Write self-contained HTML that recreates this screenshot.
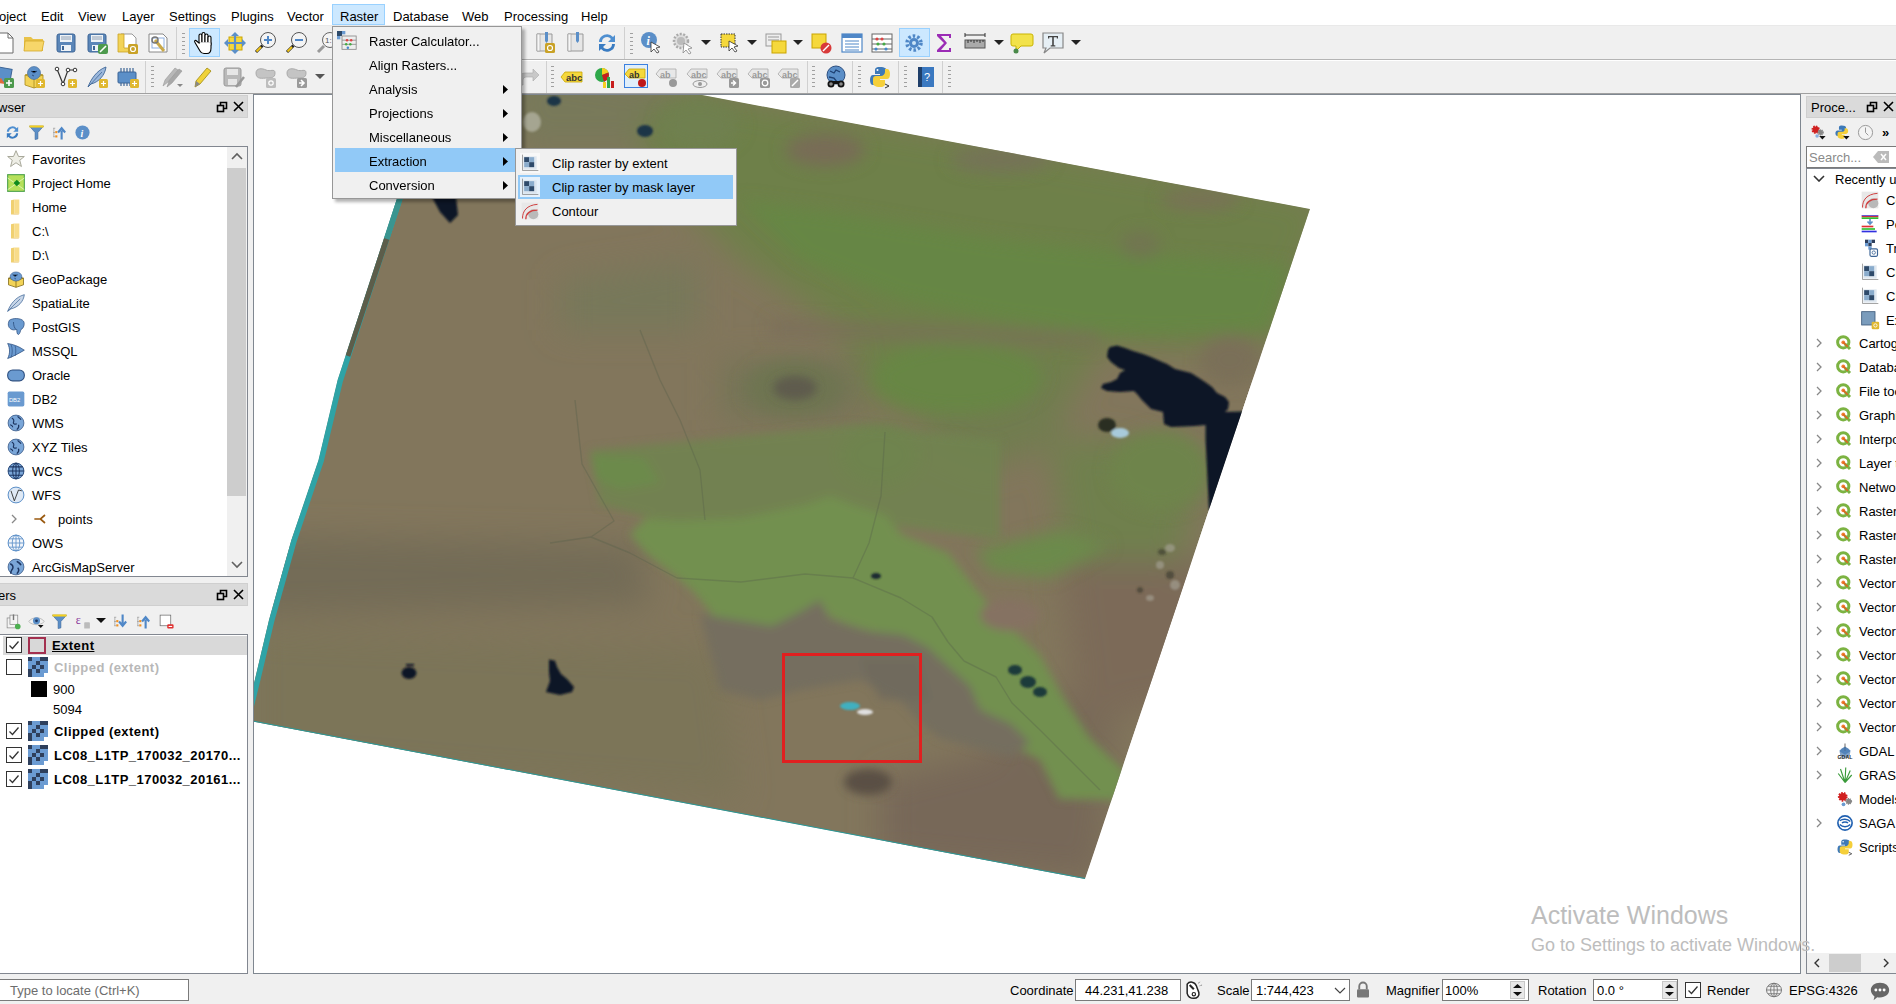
<!DOCTYPE html>
<html><head><meta charset="utf-8">
<style>
*{margin:0;padding:0;box-sizing:border-box}
html,body{width:1896px;height:1004px;overflow:hidden;background:#f0f0f0;font-family:"Liberation Sans",sans-serif;font-size:13px;color:#000}
.a{position:absolute}
.t{position:absolute;white-space:nowrap;line-height:14px}
.b{font-weight:bold}
.dtitle{position:absolute;background:#dadada;border:1px solid #cfcfcf}
.tree{position:absolute;background:#fff;border:1px solid #828790}
.menu{position:absolute;background:#f0f0f0;border:1px solid #979797}
.cb{position:absolute;width:16px;height:16px;border:1px solid #333;background:#fff}
</style></head><body>

<div class="a" style="left:0;top:0;width:1896px;height:26px;background:#fff"></div>
<div class="a" style="left:332px;top:4px;width:53px;height:21px;background:#cce8ff;border:1px solid #99d1ff"></div>
<span class="t" style="left:-1px;top:10px;">oject</span>
<span class="t" style="left:41px;top:10px;">Edit</span>
<span class="t" style="left:78px;top:10px;">View</span>
<span class="t" style="left:122px;top:10px;">Layer</span>
<span class="t" style="left:169px;top:10px;">Settings</span>
<span class="t" style="left:231px;top:10px;">Plugins</span>
<span class="t" style="left:287px;top:10px;">Vector</span>
<span class="t" style="left:340px;top:10px;">Raster</span>
<span class="t" style="left:393px;top:10px;">Database</span>
<span class="t" style="left:462px;top:10px;">Web</span>
<span class="t" style="left:504px;top:10px;">Processing</span>
<span class="t" style="left:581px;top:10px;">Help</span>
<div class="a" style="left:0;top:25px;width:1896px;height:35px;background:#f0f0f0;border-top:1px solid #e9e9e9;border-bottom:1px solid #b4b4b4"></div>
<div class="a" style="left:0;top:60px;width:1896px;height:34px;background:#f0f0f0;border-top:1px solid #ffffff;border-bottom:1px solid #a0a0a0"></div>
<div class="a" style="left:176px;top:27px;width:1px;height:32px;background:#d0d0d0"></div>
<div class="a" style="left:182px;top:32px;width:3px;height:24px;background:repeating-linear-gradient(#f0f0f0 0 1px,#a0a0a0 1px 2px,#f0f0f0 2px 4px)"></div>
<div class="a" style="left:624px;top:27px;width:1px;height:32px;background:#d0d0d0"></div>
<div class="a" style="left:630px;top:32px;width:3px;height:24px;background:repeating-linear-gradient(#f0f0f0 0 1px,#a0a0a0 1px 2px,#f0f0f0 2px 4px)"></div>
<div class="a" style="left:189px;top:28px;width:31px;height:29px;background:#cce8ff;border:1px solid #99d1ff"></div>
<div class="a" style="left:899px;top:28px;width:31px;height:29px;background:#cce8ff;border:1px solid #99d1ff"></div>
<svg class="a" style="left:-7.0px;top:31.0px" width="24" height="24" viewBox="0 0 24 24"><path d="M4 2h11l5 5v15H4z" fill="#fff" stroke="#6b6b6b"/><path d="M15 2v5h5" fill="none" stroke="#6b6b6b"/></svg>
<svg class="a" style="left:22.0px;top:31.0px" width="24" height="24" viewBox="0 0 24 24"><path d="M2 6h7l2 2h10v12H2z" fill="#e8c24a"/><path d="M3 10h19l-2 10H2z" fill="#f7d66a" stroke="#d4a928" stroke-width=".8"/></svg>
<svg class="a" style="left:54.0px;top:31.0px" width="24" height="24" viewBox="0 0 24 24"><rect x="3" y="3" width="18" height="18" rx="2" fill="#5b86b8" stroke="#3d6596"/><rect x="6" y="4" width="12" height="7" fill="#eef2f6"/><path d="M7 6h10M7 8h10" stroke="#7a8ea6" stroke-width=".8"/><rect x="7" y="14" width="10" height="6" fill="#eef2f6"/><rect x="8" y="15" width="2" height="4" fill="#3d6596"/></svg>
<svg class="a" style="left:85.0px;top:31.0px" width="24" height="24" viewBox="0 0 24 24"><rect x="3" y="3" width="18" height="18" rx="2" fill="#5b86b8" stroke="#3d6596"/><rect x="6" y="4" width="12" height="7" fill="#eef2f6"/><path d="M7 6h10M7 8h10" stroke="#7a8ea6" stroke-width=".8"/><rect x="7" y="14" width="10" height="6" fill="#eef2f6"/><rect x="8" y="15" width="2" height="4" fill="#3d6596"/><rect x="13" y="13" width="10" height="10" rx="2" fill="#4d9a4d"/><path d="M15 21l6-6" stroke="#fff" stroke-width="1.6"/></svg>
<svg class="a" style="left:115.0px;top:31.0px" width="24" height="24" viewBox="0 0 24 24"><path d="M6 3h11l4 4v13H6z" fill="#fff" stroke="#999"/><path d="M3 3h6v14h10v4H3z" fill="#f2d357" stroke="#c9a227" stroke-width=".8"/><rect x="13" y="13" width="10" height="10" rx="1.5" fill="#c9a227"/><circle cx="18" cy="18" r="2.5" fill="none" stroke="#fff" stroke-width="1.2"/></svg>
<svg class="a" style="left:146.0px;top:31.0px" width="24" height="24" viewBox="0 0 24 24"><path d="M3 3h14l4 4v14H3z" fill="#fff" stroke="#888"/><rect x="6" y="7" width="12" height="10" fill="none" stroke="#8fb0e0"/><path d="M9 9l9 11" stroke="#c9a94a" stroke-width="3"/><circle cx="9" cy="9" r="3" fill="none" stroke="#777" stroke-width="1.5"/></svg>
<svg class="a" style="left:192.0px;top:31.0px" width="24" height="24" viewBox="0 0 24 24"><g fill="#fff" stroke="#000" stroke-width="1.1"><rect x="7" y="3" width="3" height="11" rx="1.5"/><rect x="10" y="1.5" width="3" height="12" rx="1.5"/><rect x="13" y="3" width="3" height="11" rx="1.5"/><rect x="16" y="5" width="3" height="10" rx="1.5"/><path d="M7 12 L4 9.5 C3 9 2 10 3 11.5 L8 20 C9 22 10 22.5 12 22.5 H15 C17.5 22.5 19 20 19 17 V12 Z"/></g><path d="M8 12.5h10.5" stroke="#fff" stroke-width="2.5"/></svg>
<svg class="a" style="left:223.0px;top:31.0px" width="24" height="24" viewBox="0 0 24 24"><rect x="6" y="6" width="13" height="13" fill="#f5d83c" stroke="#c9a400"/><path d="M12 1l4 4h-8zM12 23l4-4h-8zM1 12l4-4v8zM23 12l-4-4v8z" fill="#5b8fc8"/><path d="M12 4v16M4 12h16" stroke="#5b8fc8" stroke-width="2.2"/></svg>
<svg class="a" style="left:254.0px;top:31.0px" width="24" height="24" viewBox="0 0 24 24"><circle cx="14" cy="9" r="7.5" fill="#f4f4f4" stroke="#555" stroke-width="1"/><path d="M10 9h8M14 5v8" stroke="#4f87c7" stroke-width="2"/><path d="M8.5 14.5L2 21" stroke="#222" stroke-width="3"/><path d="M7 16L2.5 20.5" stroke="#f0c419" stroke-width="2"/></svg>
<svg class="a" style="left:285.0px;top:31.0px" width="24" height="24" viewBox="0 0 24 24"><circle cx="14" cy="9" r="7.5" fill="#f4f4f4" stroke="#555" stroke-width="1"/><path d="M10 9h8" stroke="#4f87c7" stroke-width="2"/><path d="M8.5 14.5L2 21" stroke="#222" stroke-width="3"/><path d="M7 16L2.5 20.5" stroke="#f0c419" stroke-width="2"/></svg>
<svg class="a" style="left:316.0px;top:31.0px" width="24" height="24" viewBox="0 0 24 24"><circle cx="14" cy="9" r="7.5" fill="#f4f4f4" stroke="#666" stroke-width="1"/><text x="9" y="12" font-size="8" font-family="Liberation Sans" fill="#555">1:</text><path d="M8 15L2 21" stroke="#999" stroke-width="3"/></svg>
<svg class="a" style="left:533.0px;top:31.0px" width="24" height="24" viewBox="0 0 24 24"><path d="M4 3h15v17H4z" fill="#e6e6e6" stroke="#999"/><rect x="4" y="3" width="3" height="17" fill="#f6f6f6" stroke="#999" stroke-width=".6"/><path d="M12 1h3v9l-1.5 2-1.5-2z" fill="#5b8fc8"/><rect x="12" y="12" width="10" height="10" rx="1.5" fill="#c9a227"/><circle cx="17" cy="17" r="2.5" fill="none" stroke="#fff" stroke-width="1.2"/></svg>
<svg class="a" style="left:564.0px;top:31.0px" width="24" height="24" viewBox="0 0 24 24"><path d="M4 3h15v17H4z" fill="#e6e6e6" stroke="#999"/><rect x="4" y="3" width="3" height="17" fill="#f6f6f6" stroke="#999" stroke-width=".6"/><path d="M12 1h3v9l-1.5 2-1.5-2z" fill="#5b8fc8"/></svg>
<svg class="a" style="left:595.0px;top:31.0px" width="24" height="24" viewBox="0 0 24 24"><path d="M4 11a8 8 0 0 1 14-5l2-2v7h-7l3-3a5 5 0 0 0-9 3z" fill="#4f8fd0"/><path d="M20 13a8 8 0 0 1-14 5l-2 2v-7h7l-3 3a5 5 0 0 0 9-3z" fill="#3a7cc2"/></svg>
<svg class="a" style="left:639.0px;top:31.0px" width="24" height="24" viewBox="0 0 24 24"><circle cx="10" cy="9" r="8" fill="#5b8fc8"/><text x="7.5" y="14" font-size="12" font-style="italic" font-weight="bold" font-family="Liberation Serif" fill="#fff">i</text><path d="M12 11l9 5-4 1 3 4-2 1-3-4-3 3z" fill="#fff" stroke="#333" stroke-width=".8"/></svg>
<svg class="a" style="left:671.0px;top:31.0px" width="24" height="24" viewBox="0 0 24 24"><circle cx="10" cy="10" r="7" fill="#ddd" stroke="#aaa" stroke-width="2.5" stroke-dasharray="2 1.5"/><circle cx="10" cy="10" r="4" fill="#bbb"/><path d="M13 12l8 5-4 1 3 4-2 1-3-4-3 3z" fill="#fff" stroke="#888" stroke-width=".8"/></svg>
<svg class="a" style="left:718.0px;top:31.0px" width="24" height="24" viewBox="0 0 24 24"><rect x="3" y="3" width="14" height="13" fill="#f5d83c" stroke="#333" stroke-dasharray="1.5 1"/><path d="M11 10l9 5-4 1 3 4-2 1-3-4-3 3z" fill="#fff" stroke="#333" stroke-width=".8"/></svg>
<svg class="a" style="left:764.0px;top:31.0px" width="24" height="24" viewBox="0 0 24 24"><rect x="2" y="3" width="15" height="12" fill="#eee" stroke="#999"/><path d="M4 6h11M4 9h11" stroke="#999"/><rect x="8" y="10" width="14" height="12" fill="#f5d83c" stroke="#c9a400"/></svg>
<svg class="a" style="left:809.0px;top:31.0px" width="24" height="24" viewBox="0 0 24 24"><rect x="3" y="3" width="14" height="14" fill="#f5d83c" stroke="#c9a400"/><circle cx="17" cy="17" r="5.5" fill="#d83a3a"/><path d="M14 20l6-6" stroke="#fff" stroke-width="1.5"/></svg>
<svg class="a" style="left:840.0px;top:31.0px" width="24" height="24" viewBox="0 0 24 24"><rect x="2" y="3" width="20" height="18" fill="#fff" stroke="#4f87c7" stroke-width="1.2"/><rect x="2" y="3" width="20" height="4" fill="#4f87c7"/><path d="M5 10h14M5 13h14M5 16h14M5 19h14" stroke="#4f87c7"/></svg>
<svg class="a" style="left:870.0px;top:31.0px" width="24" height="24" viewBox="0 0 24 24"><rect x="2" y="3" width="20" height="18" fill="#fff" stroke="#666"/><path d="M2 8h20M2 13h20M2 18h20" stroke="#666"/><circle cx="7" cy="8" r="1.6" fill="#d44"/><circle cx="12" cy="8" r="1.6" fill="#d44"/><circle cx="8" cy="13" r="1.6" fill="#4a4"/><circle cx="14" cy="13" r="1.6" fill="#4a4"/><circle cx="6" cy="18" r="1.6" fill="#48c"/><circle cx="16" cy="18" r="1.6" fill="#48c"/></svg>
<svg class="a" style="left:902.0px;top:31.0px" width="24" height="24" viewBox="0 0 24 24"><circle cx="12" cy="12" r="7" fill="none" stroke="#4f87c7" stroke-width="3.5" stroke-dasharray="2.5 2"/><circle cx="12" cy="12" r="5" fill="#4f87c7"/><circle cx="12" cy="12" r="2" fill="#cce4f7"/></svg>
<svg class="a" style="left:932.0px;top:31.0px" width="24" height="24" viewBox="0 0 24 24"><path d="M5 3h14v4h-2V5H9l6 7-6 7h8v-2h2v4H5v-2l7-7-7-7z" fill="#9b2bb5"/></svg>
<svg class="a" style="left:963.0px;top:31.0px" width="24" height="24" viewBox="0 0 24 24"><rect x="2" y="9" width="20" height="8" fill="#aaa" stroke="#555"/><path d="M5 9v3M8 9v2M11 9v3M14 9v2M17 9v3M20 9v2" stroke="#333"/><path d="M2 4h20M2 2v4M22 2v4" stroke="#333"/></svg>
<svg class="a" style="left:1010.0px;top:31.0px" width="24" height="24" viewBox="0 0 24 24"><path d="M3 3h18a2 2 0 0 1 2 2v8a2 2 0 0 1-2 2H11l-5 5v-5H3a2 2 0 0 1-2-2V5a2 2 0 0 1 2-2z" fill="#f2e24a" stroke="#c9b400"/><circle cx="6" cy="20" r="2.5" fill="#4a8a4a"/></svg>
<svg class="a" style="left:1041.0px;top:31.0px" width="24" height="24" viewBox="0 0 24 24"><path d="M2 2h20v15H9l-6 5 2-5H2z" fill="#e6eff5" stroke="#888" stroke-width="1.2"/><path d="M7 5h10v2.5h-1.2V6.3h-3v8h1.5v1.2H9.7v-1.2h1.5v-8h-3v1.2H7z" fill="#444"/></svg>
<svg class="a" style="left:701px;top:40px" width="10" height="6" viewBox="0 0 10 6"><path d="M0 0h10L5 5z" fill="#222"/></svg>
<svg class="a" style="left:747px;top:40px" width="10" height="6" viewBox="0 0 10 6"><path d="M0 0h10L5 5z" fill="#222"/></svg>
<svg class="a" style="left:793px;top:40px" width="10" height="6" viewBox="0 0 10 6"><path d="M0 0h10L5 5z" fill="#222"/></svg>
<svg class="a" style="left:994px;top:40px" width="10" height="6" viewBox="0 0 10 6"><path d="M0 0h10L5 5z" fill="#222"/></svg>
<svg class="a" style="left:1071px;top:40px" width="10" height="6" viewBox="0 0 10 6"><path d="M0 0h10L5 5z" fill="#222"/></svg>
<div class="a" style="left:145px;top:61px;width:1px;height:32px;background:#d0d0d0"></div>
<div class="a" style="left:151px;top:65px;width:3px;height:24px;background:repeating-linear-gradient(#f0f0f0 0 1px,#a0a0a0 1px 2px,#f0f0f0 2px 4px)"></div>
<div class="a" style="left:546px;top:61px;width:1px;height:32px;background:#d0d0d0"></div>
<div class="a" style="left:551px;top:65px;width:3px;height:24px;background:repeating-linear-gradient(#f0f0f0 0 1px,#a0a0a0 1px 2px,#f0f0f0 2px 4px)"></div>
<div class="a" style="left:807px;top:61px;width:1px;height:32px;background:#d0d0d0"></div>
<div class="a" style="left:812px;top:65px;width:3px;height:24px;background:repeating-linear-gradient(#f0f0f0 0 1px,#a0a0a0 1px 2px,#f0f0f0 2px 4px)"></div>
<div class="a" style="left:852px;top:61px;width:1px;height:32px;background:#d0d0d0"></div>
<div class="a" style="left:858px;top:65px;width:3px;height:24px;background:repeating-linear-gradient(#f0f0f0 0 1px,#a0a0a0 1px 2px,#f0f0f0 2px 4px)"></div>
<div class="a" style="left:898px;top:61px;width:1px;height:32px;background:#d0d0d0"></div>
<div class="a" style="left:904px;top:65px;width:3px;height:24px;background:repeating-linear-gradient(#f0f0f0 0 1px,#a0a0a0 1px 2px,#f0f0f0 2px 4px)"></div>
<div class="a" style="left:942px;top:61px;width:1px;height:32px;background:#d0d0d0"></div>
<div class="a" style="left:948px;top:65px;width:3px;height:24px;background:repeating-linear-gradient(#f0f0f0 0 1px,#a0a0a0 1px 2px,#f0f0f0 2px 4px)"></div>
<div class="a" style="left:624px;top:64px;width:24px;height:24px;background:#e0eefa;border:1px solid #3a80e0"></div>
<svg class="a" style="left:-7.0px;top:65.0px" width="24" height="24" viewBox="0 0 24 24"><rect x="4" y="3" width="14" height="14" fill="#5b8fc8" stroke="#3d6596" transform="rotate(10 11 10)"/><path d="M0 17l8-4 4 6z" fill="#e06a3a"/><rect x="11" y="13" width="10" height="10" rx="1.5" fill="#4d9a4d"/><path d="M16 15v6M13 18h6" stroke="#fff" stroke-width="1.6"/></svg>
<svg class="a" style="left:22.0px;top:65.0px" width="24" height="24" viewBox="0 0 24 24"><path d="M3 10l9-3 9 3v10l-9 3-9-3z" fill="#f2d357" stroke="#a88a1a" stroke-width=".8"/><path d="M3 10l9 3 9-3M12 13v10" stroke="#a88a1a" stroke-width=".8" fill="none"/><circle cx="12" cy="8" r="6.5" fill="#5b8fc8" stroke="#3d6596" stroke-width=".6"/><path d="M9 6l3 2 3-2M10 10l2 1" stroke="#2d4f80"/><rect x="14" y="14" width="9" height="9" rx="1.5" fill="#e0b830"/><path d="M18.5 16v5M16 18.5h5" stroke="#fff" stroke-width="1.2"/></svg>
<svg class="a" style="left:54.0px;top:65.0px" width="24" height="24" viewBox="0 0 24 24"><path d="M3 4l6 15 5-14 7 0" fill="none" stroke="#333" stroke-width="1.2"/><circle cx="3" cy="4" r="1.8" fill="#fff" stroke="#333"/><circle cx="9" cy="19" r="1.8" fill="#fff" stroke="#333"/><circle cx="14" cy="5" r="1.8" fill="#fff" stroke="#333"/><circle cx="21" cy="5" r="1.8" fill="#fff" stroke="#333"/><rect x="14" y="14" width="9" height="9" rx="1.5" fill="#e0b830"/><path d="M18.5 16v5M16 18.5h5" stroke="#fff" stroke-width="1.2"/></svg>
<svg class="a" style="left:85.0px;top:65.0px" width="24" height="24" viewBox="0 0 24 24"><path d="M3 22C6 14 12 5 21 2c-1 8-7 15-15 17z" fill="#9cb8dc" stroke="#3d6596" stroke-width=".9"/><path d="M3 22L17 7" stroke="#3d6596" stroke-width=".8"/><rect x="14" y="14" width="9" height="9" rx="1.5" fill="#e0b830"/><path d="M18.5 16v5M16 18.5h5" stroke="#fff" stroke-width="1.2"/></svg>
<svg class="a" style="left:116.0px;top:65.0px" width="24" height="24" viewBox="0 0 24 24"><rect x="2" y="7" width="18" height="11" rx="1" fill="#5b8fc8" stroke="#3d6596"/><path d="M5 3v4M8 3v4M11 3v4M14 3v4M17 3v4M5 18v3M8 18v3M11 18v3M14 18v3" stroke="#3d6596" stroke-width="1.2"/><rect x="14" y="14" width="9" height="9" rx="1.5" fill="#e0b830"/><path d="M18.5 16v5M16 18.5h5" stroke="#fff" stroke-width="1.2"/></svg>
<svg class="a" style="left:161.0px;top:65.0px" width="24" height="24" viewBox="0 0 24 24"><path d="M2 21l2-6 10-12 3 2-10 12z" fill="#b8b8b8" stroke="#999" stroke-width=".6"/><path d="M6 22l2-6 10-12 3 2-10 12z" fill="#a8a8a8" stroke="#999" stroke-width=".6"/><path d="M16 19h6l-3 3z" fill="#888"/></svg>
<svg class="a" style="left:191.0px;top:65.0px" width="24" height="24" viewBox="0 0 24 24"><path d="M4 22l1-6 11-13 4 3-11 13z" fill="#f0d23a" stroke="#a08a10" stroke-width=".8"/><path d="M4 22l1-6 4 3z" fill="#888"/></svg>
<svg class="a" style="left:222.0px;top:65.0px" width="24" height="24" viewBox="0 0 24 24"><rect x="2" y="3" width="17" height="18" rx="2" fill="#b9b9b9" stroke="#999"/><rect x="5" y="4" width="11" height="6" fill="#e6e6e6"/><rect x="6" y="14" width="9" height="6" fill="#e6e6e6"/><path d="M14 22l8-10" stroke="#999" stroke-width="2.5"/></svg>
<svg class="a" style="left:254.0px;top:65.0px" width="24" height="24" viewBox="0 0 24 24"><path d="M2 8c0-5 6-5 10-3s9-2 9 3-4 5-8 5-11 2-11-5z" fill="#c4c4c4" stroke="#aaa"/><rect x="12" y="13" width="10" height="10" rx="1.5" fill="#bdbdbd"/><circle cx="17" cy="18" r="2.2" fill="none" stroke="#fff" stroke-width="1.2"/></svg>
<svg class="a" style="left:285.0px;top:65.0px" width="24" height="24" viewBox="0 0 24 24"><path d="M2 8c0-5 6-5 10-3s9-2 9 3-4 5-8 5-11 2-11-5z" fill="#c4c4c4" stroke="#aaa"/><rect x="12" y="13" width="10" height="10" rx="1.5" fill="#9a9a9a"/><path d="M14 18h4M16 15l3 3-3 3" stroke="#fff" stroke-width="1.6" fill="none"/></svg>
<svg class="a" style="left:517.0px;top:65.0px" width="24" height="24" viewBox="0 0 24 24"><path d="M2 20v-6a6 6 0 0 1 6-6h8V4l6 6-6 6v-4H9a3 3 0 0 0-3 3v5z" fill="#c8c8c8" stroke="#aaa" stroke-width=".6"/></svg>
<svg class="a" style="left:560.0px;top:65.0px" width="24" height="24" viewBox="0 0 24 24"><path d="M1 12l4-5h17v10H5z" fill="#f5d83c" stroke="#c9a400" stroke-width=".8"/><text x="6" y="16" font-size="9.5" font-weight="bold" font-family="Liberation Sans" fill="#333">abc</text></svg>
<svg class="a" style="left:593.0px;top:65.0px" width="24" height="24" viewBox="0 0 24 24"><circle cx="9" cy="10" r="7" fill="#2ea84a"/><path d="M9 10V3a7 7 0 0 1 6.5 4.5z" fill="#f5d020"/><path d="M9 10l6.5-2.5A7 7 0 0 1 11 16.7z" fill="#c81e1e"/><rect x="10" y="17" width="3" height="6" fill="#f5d020"/><rect x="14" y="12" width="3" height="11" fill="#2ea84a"/><rect x="18" y="16" width="3" height="7" fill="#c81e1e"/></svg>
<svg class="a" style="left:624.0px;top:65.0px" width="24" height="24" viewBox="0 0 24 24"><path d="M1 9l4-5h16v9H5z" fill="#f5d83c" stroke="#c9a400" stroke-width=".8"/><text x="5" y="12.5" font-size="9" font-weight="bold" font-family="Liberation Sans" fill="#333">ab</text><circle cx="18" cy="18" r="4" fill="#c01818"/></svg>
<svg class="a" style="left:655.0px;top:65.0px" width="24" height="24" viewBox="0 0 24 24"><path d="M1 9l4-5h16v9H5z" fill="#e8e8e8" stroke="#aaa" stroke-width=".8"/><text x="5" y="12.5" font-size="9" font-weight="bold" font-family="Liberation Sans" fill="#999">ab</text><circle cx="18" cy="18" r="4" fill="#999"/></svg>
<svg class="a" style="left:686.0px;top:65.0px" width="24" height="24" viewBox="0 0 24 24"><path d="M1 9l4-5h16v9H5z" fill="#e8e8e8" stroke="#aaa" stroke-width=".8"/><text x="5" y="12.5" font-size="9" font-weight="bold" font-family="Liberation Sans" fill="#999">abc</text><ellipse cx="14" cy="19" rx="7" ry="3.5" fill="#eee" stroke="#999"/><circle cx="14" cy="19" r="2" fill="#999"/></svg>
<svg class="a" style="left:716.0px;top:65.0px" width="24" height="24" viewBox="0 0 24 24"><path d="M1 9l4-5h16v9H5z" fill="#e8e8e8" stroke="#aaa" stroke-width=".8"/><text x="5" y="12.5" font-size="9" font-weight="bold" font-family="Liberation Sans" fill="#999">abc</text><rect x="13" y="13" width="10" height="10" rx="1.5" fill="#999"/><path d="M15 18h4M17 15.5l2.5 2.5-2.5 2.5" stroke="#fff" stroke-width="1.5" fill="none"/></svg>
<svg class="a" style="left:747.0px;top:65.0px" width="24" height="24" viewBox="0 0 24 24"><path d="M1 9l4-5h16v9H5z" fill="#e8e8e8" stroke="#aaa" stroke-width=".8"/><text x="5" y="12.5" font-size="9" font-weight="bold" font-family="Liberation Sans" fill="#999">abc</text><rect x="13" y="13" width="10" height="10" rx="1.5" fill="#999"/><circle cx="18" cy="18" r="2.8" fill="none" stroke="#fff" stroke-width="1.3"/></svg>
<svg class="a" style="left:777.0px;top:65.0px" width="24" height="24" viewBox="0 0 24 24"><path d="M1 9l4-5h16v9H5z" fill="#e8e8e8" stroke="#aaa" stroke-width=".8"/><text x="5" y="12.5" font-size="9" font-weight="bold" font-family="Liberation Sans" fill="#999">abc</text><rect x="13" y="13" width="10" height="10" rx="1.5" fill="#aaa"/><path d="M15 21l6-6" stroke="#fff" stroke-width="1.5"/></svg>
<svg class="a" style="left:824.0px;top:65.0px" width="24" height="24" viewBox="0 0 24 24"><circle cx="12" cy="10" r="9" fill="#5b8fc8" stroke="#2d4f80"/><path d="M6 6l4 2 2-3 4 2M5 12l5 1 3 4" stroke="#1d3f70" stroke-width="1.3" fill="none"/><circle cx="7" cy="19" r="3.5" fill="#111"/><circle cx="17" cy="19" r="3.5" fill="#111"/><rect x="9" y="16" width="6" height="3" fill="#111"/><circle cx="7" cy="19" r="1.8" fill="#888"/><circle cx="17" cy="19" r="1.8" fill="#888"/></svg>
<svg class="a" style="left:868.0px;top:65.0px" width="24" height="24" viewBox="0 0 24 24"><path d="M12 2c-5 0-5 2-5 4v3h5v1H5c-2 0-3 2-3 5s1 5 3 5h2v-3c0-2 2-4 4-4h5c2 0 3-1 3-3V6c0-2-2-4-7-4z" fill="#3d79b8"/><circle cx="9.5" cy="5" r="1" fill="#fff"/><path d="M12 22c5 0 5-2 5-4v-3h-5v-1h7c2 0 3-2 3-5s-1-5-3-5h-2v3c0 2-2 4-4 4H8c-2 0-3 1-3 3v4c0 2 2 4 7 4z" fill="#f5cf3a"/><path d="M17 19l4 2-4 2" fill="none" stroke="#333" stroke-width="1"/></svg>
<svg class="a" style="left:914.0px;top:65.0px" width="24" height="24" viewBox="0 0 24 24"><rect x="4" y="2" width="16" height="20" fill="#3a78c0"/><rect x="4" y="2" width="4" height="20" fill="#1f3f6a"/><text x="10" y="16" font-size="11" font-family="Liberation Sans" fill="#fff">?</text></svg>
<svg class="a" style="left:315px;top:74px" width="10" height="6" viewBox="0 0 10 6"><path d="M0 0h10L5 5z" fill="#555"/></svg>
<div class="dtitle" style="left:-1px;top:95px;width:249px;height:23px"></div>
<span class="t" style="left:-2px;top:101px;">wser</span>
<svg class="a" style="left:216px;top:101px" width="12" height="12" viewBox="0 0 12 12"><rect x="1.5" y="4.5" width="6" height="6" fill="none" stroke="#000" stroke-width="1.6"/><path d="M4.5 4.5V1.5h6v6H7.5" fill="none" stroke="#000" stroke-width="1.6"/></svg>
<svg class="a" style="left:233px;top:101px" width="11" height="11" viewBox="0 0 11 11"><path d="M1 1l9 9M10 1l-9 9" stroke="#000" stroke-width="1.6"/></svg>
<svg class="a" style="left:3.5px;top:123.5px" width="17" height="17" viewBox="0 0 24 24"><path d="M4 11a8 8 0 0 1 14-5l2-2v7h-7l3-3a5 5 0 0 0-9 3z" fill="#4f8fd0"/><path d="M20 13a8 8 0 0 1-14 5l-2 2v-7h7l-3 3a5 5 0 0 0 9-3z" fill="#3a7cc2"/></svg>
<svg class="a" style="left:27.5px;top:123.5px" width="17" height="17" viewBox="0 0 24 24"><path d="M2 3h20l-8 9v9l-4 1V12z" fill="#5b8fc8" stroke="#3d6596" stroke-width=".8"/><rect x="2" y="2" width="20" height="3" fill="#f5d020"/></svg>
<svg class="a" style="left:50.5px;top:123.5px" width="17" height="17" viewBox="0 0 24 24"><path d="M3 6h3M3 12h3M3 18h3M4 6v12" stroke="#999" stroke-width="1"/><rect x="6" y="10" width="3" height="3" fill="#f09020"/><rect x="6" y="16" width="3" height="3" fill="#f09020"/><path d="M15 22V9M10 12l5-6 5 6" stroke="#4f87c7" stroke-width="3" fill="none"/></svg>
<svg class="a" style="left:73.5px;top:123.5px" width="17" height="17" viewBox="0 0 24 24"><circle cx="12" cy="12" r="10" fill="#5b8fc8"/><text x="9" y="18" font-size="14" font-style="italic" font-weight="bold" font-family="Liberation Serif" fill="#fff">i</text></svg>
<div class="tree" style="left:-1px;top:146px;width:249px;height:431px"></div>
<div class="a" style="left:227px;top:147px;width:20px;height:429px;background:#f0f0f0"></div>
<div class="a" style="left:227px;top:168px;width:19px;height:328px;background:#cdcdcd"></div>
<svg class="a" style="left:231px;top:152px" width="12" height="8" viewBox="0 0 12 8"><path d="M1 7l5-5 5 5" fill="none" stroke="#606060" stroke-width="1.6"/></svg>
<svg class="a" style="left:231px;top:561px" width="12" height="8" viewBox="0 0 12 8"><path d="M1 1l5 5 5-5" fill="none" stroke="#606060" stroke-width="1.6"/></svg>
<svg class="a" style="left:6.0px;top:149.0px" width="20" height="20" viewBox="0 0 24 24"><path d="M12 2l3 7h7l-5.5 4.5 2 7.5-6.5-4.5-6.5 4.5 2-7.5L2 9h7z" fill="#eeeee6" stroke="#a8a89a" stroke-width="1.2"/></svg>
<span class="t" style="left:32px;top:153px;">Favorites</span>
<svg class="a" style="left:6.0px;top:173.0px" width="20" height="20" viewBox="0 0 24 24"><rect x="2" y="2" width="20" height="20" fill="#b6e05a" stroke="#4aa04a" stroke-width="1.3"/><path d="M2 6l20 14M2 20l20-14" stroke="#e6f6c0" stroke-width="1"/><path d="M13 8l4 4-4 4-4-4z" fill="#0e8a1e"/></svg>
<span class="t" style="left:32px;top:177px;">Project Home</span>
<svg class="a" style="left:6.0px;top:197.0px" width="20" height="20" viewBox="0 0 24 24"><path d="M6 4l4-1v17l-4 1z" fill="#f0d070"/><path d="M10 3h6v17h-6z" fill="#f8dc8a"/><path d="M10 20h6l-1 1H6z" fill="#e8c060"/></svg>
<span class="t" style="left:32px;top:201px;">Home</span>
<svg class="a" style="left:6.0px;top:221.0px" width="20" height="20" viewBox="0 0 24 24"><path d="M6 4l4-1v17l-4 1z" fill="#f0d070"/><path d="M10 3h6v17h-6z" fill="#f8dc8a"/><path d="M10 20h6l-1 1H6z" fill="#e8c060"/></svg>
<span class="t" style="left:32px;top:225px;">C:\</span>
<svg class="a" style="left:6.0px;top:245.0px" width="20" height="20" viewBox="0 0 24 24"><path d="M6 4l4-1v17l-4 1z" fill="#f0d070"/><path d="M10 3h6v17h-6z" fill="#f8dc8a"/><path d="M10 20h6l-1 1H6z" fill="#e8c060"/></svg>
<span class="t" style="left:32px;top:249px;">D:\</span>
<svg class="a" style="left:6.0px;top:269.0px" width="20" height="20" viewBox="0 0 24 24"><path d="M3 11l9-3 9 3v8l-9 3-9-3z" fill="#f2d357" stroke="#7a6210" stroke-width=".9"/><path d="M3 11l9 3 9-3M12 14v8" stroke="#7a6210" stroke-width=".9" fill="none"/><ellipse cx="12" cy="9" rx="7" ry="5.5" fill="#6a9ad0" stroke="#2d4f80" stroke-width=".6"/><path d="M8 7l3 2 3-2M10 11l2 1" stroke="#2d4f80"/></svg>
<span class="t" style="left:32px;top:273px;">GeoPackage</span>
<svg class="a" style="left:6.0px;top:293.0px" width="20" height="20" viewBox="0 0 24 24"><path d="M2 22C5 14 11 5 22 2c-1 8-7 15-16 17z" fill="#c8d6e8" stroke="#3d6596" stroke-width=".9"/><path d="M2 22L17 7" stroke="#3d6596" stroke-width=".8"/></svg>
<span class="t" style="left:32px;top:297px;">SpatiaLite</span>
<svg class="a" style="left:6.0px;top:317.0px" width="20" height="20" viewBox="0 0 24 24"><path d="M4 4c4-3 14-3 17 1 2 3 0 9-3 10-1 2-1 5-3 6-2 0-2-4-2-6-2 0-4 1-6 0-3-1-6-5-3-11z" fill="#6a9ad0" stroke="#2d4f80" stroke-width=".9"/><path d="M9 6c0 4 1 7 3 9" stroke="#2d4f80" fill="none"/></svg>
<span class="t" style="left:32px;top:321px;">PostGIS</span>
<svg class="a" style="left:6.0px;top:341.0px" width="20" height="20" viewBox="0 0 24 24"><path d="M2 3c6 1 13 3 20 8-7 4-14 8-20 10 3-6 3-12 0-18z" fill="#6a9ad0" stroke="#2d4f80" stroke-width=".9"/><path d="M6 4c2 5 2 11 0 16M11 6c1 4 1 8 0 12" stroke="#2d4f80" fill="none" stroke-width=".8"/></svg>
<span class="t" style="left:32px;top:345px;">MSSQL</span>
<svg class="a" style="left:6.0px;top:365.0px" width="20" height="20" viewBox="0 0 24 24"><rect x="2" y="6" width="20" height="13" rx="6" fill="#6a9ad0" stroke="#2d4f80" stroke-width="1.3"/></svg>
<span class="t" style="left:32px;top:369px;">Oracle</span>
<svg class="a" style="left:6.0px;top:389.0px" width="20" height="20" viewBox="0 0 24 24"><rect x="2" y="3" width="20" height="18" rx="2" fill="#6a9ad0"/><text x="3.5" y="15" font-size="7" font-family="Liberation Sans" fill="#fff">DB2</text></svg>
<span class="t" style="left:32px;top:393px;">DB2</span>
<svg class="a" style="left:6.0px;top:413.0px" width="20" height="20" viewBox="0 0 24 24"><circle cx="12" cy="12" r="9.5" fill="#7aa6d8" stroke="#2d4f80" stroke-width=".9"/><path d="M7 6c2 1 3 3 2 5s2 3 4 2M14 4c1 2 3 2 4 4M15 14c1 2 0 4-2 6M5 14c1 1 3 1 3 3" stroke="#1d3560" stroke-width="1.4" fill="none"/></svg>
<span class="t" style="left:32px;top:417px;">WMS</span>
<svg class="a" style="left:6.0px;top:437.0px" width="20" height="20" viewBox="0 0 24 24"><circle cx="12" cy="12" r="9.5" fill="#7aa6d8" stroke="#2d4f80" stroke-width=".9"/><path d="M7 6c2 1 3 3 2 5s2 3 4 2M14 4c1 2 3 2 4 4M15 14c1 2 0 4-2 6M5 14c1 1 3 1 3 3" stroke="#1d3560" stroke-width="1.4" fill="none"/></svg>
<span class="t" style="left:32px;top:441px;">XYZ Tiles</span>
<svg class="a" style="left:6.0px;top:461.0px" width="20" height="20" viewBox="0 0 24 24"><circle cx="12" cy="12" r="9.5" fill="#7aa6d8" stroke="#2d4f80" stroke-width="1.2"/><path d="M2.5 12h19M12 2.5v19M4 7h16M4 17h16" stroke="#1d3560" stroke-width="1.3"/><ellipse cx="12" cy="12" rx="4" ry="9.5" fill="none" stroke="#1d3560" stroke-width="1.2"/></svg>
<span class="t" style="left:32px;top:465px;">WCS</span>
<svg class="a" style="left:6.0px;top:485.0px" width="20" height="20" viewBox="0 0 24 24"><circle cx="12" cy="12" r="9.5" fill="#dfe9f5" stroke="#5b8fc8" stroke-width="1.2"/><path d="M6 7l4 12 5-13 4 1" fill="none" stroke="#333" stroke-width="1.1"/></svg>
<span class="t" style="left:32px;top:489px;">WFS</span>
<svg class="a" style="left:11px;top:514px" width="7" height="10" viewBox="0 0 7 10"><path d="M1 1l4 4-4 4" fill="none" stroke="#888" stroke-width="1.3"/></svg>
<svg class="a" style="left:33.0px;top:511.0px" width="16" height="16" viewBox="0 0 24 24"><path d="M2 12h9M18 6l-7 6 7 6" fill="none" stroke="#9a5a10" stroke-width="2.5"/></svg>
<span class="t" style="left:58px;top:513px;">points</span>
<svg class="a" style="left:6.0px;top:533.0px" width="20" height="20" viewBox="0 0 24 24"><circle cx="12" cy="12" r="9.5" fill="#f2f6fb" stroke="#5b8fc8" stroke-width="1.2"/><path d="M2.5 12h19M12 2.5v19M4 7h16M4 17h16" stroke="#5b8fc8" stroke-width="1"/><ellipse cx="12" cy="12" rx="4.5" ry="9.5" fill="none" stroke="#5b8fc8" stroke-width="1"/></svg>
<span class="t" style="left:32px;top:537px;">OWS</span>
<svg class="a" style="left:6.0px;top:557.0px" width="20" height="20" viewBox="0 0 24 24"><circle cx="12" cy="12" r="9.5" fill="#7aa6d8" stroke="#2d4f80" stroke-width=".9"/><path d="M5 8c3 1 4 4 3 6s-3 3-2 6M13 5c2 2 4 2 5 5M14 13c2 2 1 5-1 7" stroke="#1d3560" stroke-width="1.8" fill="none"/></svg>
<span class="t" style="left:32px;top:561px;">ArcGisMapServer</span>
<div class="dtitle" style="left:-1px;top:583px;width:249px;height:23px"></div>
<span class="t" style="left:-2px;top:589px;">ers</span>
<svg class="a" style="left:216px;top:589px" width="12" height="12" viewBox="0 0 12 12"><rect x="1.5" y="4.5" width="6" height="6" fill="none" stroke="#000" stroke-width="1.6"/><path d="M4.5 4.5V1.5h6v6H7.5" fill="none" stroke="#000" stroke-width="1.6"/></svg>
<svg class="a" style="left:233px;top:589px" width="11" height="11" viewBox="0 0 11 11"><path d="M1 1l9 9M10 1l-9 9" stroke="#000" stroke-width="1.6"/></svg>
<svg class="a" style="left:4.5px;top:612.5px" width="17" height="17" viewBox="0 0 24 24"><rect x="3" y="7" width="13" height="14" fill="#f4f4f4" stroke="#888"/><rect x="7" y="3" width="11" height="13" fill="#f4f4f4" stroke="#888"/><path d="M12 2v8" stroke="#777" stroke-width="2"/><circle cx="18" cy="19" r="4" fill="#4caf50"/></svg>
<svg class="a" style="left:27.5px;top:612.5px" width="17" height="17" viewBox="0 0 24 24"><path d="M1 12c5-7 17-7 22 0-5 6-17 6-22 0z" fill="#f0f0f0" stroke="#aaa"/><circle cx="12" cy="11" r="5" fill="#5b8fc8"/><circle cx="12" cy="11" r="2" fill="#1d3560"/><path d="M14 17h8l-4 4z" fill="#111"/></svg>
<svg class="a" style="left:50.5px;top:612.5px" width="17" height="17" viewBox="0 0 24 24"><path d="M2 3h20l-8 9v9l-4 1V12z" fill="#5b8fc8" stroke="#3d6596" stroke-width=".8"/><rect x="2" y="2" width="20" height="3" fill="#f5d020"/></svg>
<svg class="a" style="left:74.5px;top:612.5px" width="17" height="17" viewBox="0 0 24 24"><text x="1" y="15" font-size="17" font-family="Liberation Serif" fill="#8a3a9a">ε</text><rect x="13" y="13" width="8" height="9" rx="1" fill="#bbb"/></svg>
<svg class="a" style="left:111.5px;top:612.5px" width="17" height="17" viewBox="0 0 24 24"><path d="M3 6h3M3 12h3M3 18h3M4 6v12" stroke="#999" stroke-width="1"/><rect x="6" y="10" width="3" height="3" fill="#f09020"/><rect x="6" y="16" width="3" height="3" fill="#f09020"/><path d="M15 2v13M10 12l5 6 5-6" stroke="#4f87c7" stroke-width="3" fill="none"/></svg>
<svg class="a" style="left:134.5px;top:612.5px" width="17" height="17" viewBox="0 0 24 24"><path d="M3 6h3M3 12h3M3 18h3M4 6v12" stroke="#999" stroke-width="1"/><rect x="6" y="10" width="3" height="3" fill="#f09020"/><rect x="6" y="16" width="3" height="3" fill="#f09020"/><path d="M15 22V9M10 12l5-6 5 6" stroke="#4f87c7" stroke-width="3" fill="none"/></svg>
<svg class="a" style="left:157.5px;top:612.5px" width="17" height="17" viewBox="0 0 24 24"><rect x="3" y="3" width="15" height="15" fill="#fff" stroke="#666"/><rect x="13" y="16" width="9" height="6" rx="1.5" fill="#e03030"/><path d="M15 19h5" stroke="#fff" stroke-width="1.5"/></svg>
<svg class="a" style="left:96px;top:618px" width="10" height="6" viewBox="0 0 10 6"><path d="M0 0h10L5 5z" fill="#111"/></svg>
<div class="tree" style="left:-1px;top:634px;width:249px;height:340px"></div>
<div class="a" style="left:3px;top:636px;width:244px;height:19px;background:#d9d9d9"></div>
<div class="cb" style="left:6px;top:637px"></div>
<svg class="a" style="left:8px;top:639px" width="12" height="12" viewBox="0 0 12 12"><path d="M1.5 6.5l3 3 6-7" fill="none" stroke="#333" stroke-width="1.3"/></svg>
<div class="a" style="left:28px;top:637px;width:18px;height:17px;border:2px solid #a3304f;background:#d8d8d8"></div>
<span class="t" style="left:52px;top:639px;font-weight:bold;text-decoration:underline;letter-spacing:0.45px">Extent</span>
<div class="cb" style="left:6px;top:659px"></div>
<svg class="a" style="left:28px;top:657px" width="20" height="20" viewBox="0 0 20 20"><rect x="0" y="0" width="4" height="4" fill="#2e3f5c"/><rect x="4" y="0" width="4" height="4" fill="#6b9bd2"/><rect x="8" y="0" width="4" height="4" fill="#6b9bd2"/><rect x="12" y="0" width="4" height="4" fill="#2e3f5c"/><rect x="16" y="0" width="4" height="4" fill="#2e3f5c"/><rect x="0" y="4" width="4" height="4" fill="#6b9bd2"/><rect x="4" y="4" width="4" height="4" fill="#6b9bd2"/><rect x="8" y="4" width="4" height="4" fill="#2e3f5c"/><rect x="12" y="4" width="4" height="4" fill="#6b9bd2"/><rect x="16" y="4" width="4" height="4" fill="#6b9bd2"/><rect x="0" y="8" width="4" height="4" fill="#6b9bd2"/><rect x="4" y="8" width="4" height="4" fill="#2e3f5c"/><rect x="8" y="8" width="4" height="4" fill="#6b9bd2"/><rect x="12" y="8" width="4" height="4" fill="#2e3f5c"/><rect x="16" y="8" width="4" height="4" fill="#6b9bd2"/><rect x="0" y="12" width="4" height="4" fill="#2e3f5c"/><rect x="4" y="12" width="4" height="4" fill="#6b9bd2"/><rect x="8" y="12" width="4" height="4" fill="#2e3f5c"/><rect x="12" y="12" width="4" height="4" fill="#6b9bd2"/><rect x="16" y="12" width="4" height="4" fill="#6b9bd2"/><rect x="0" y="16" width="4" height="4" fill="#2e3f5c"/><rect x="4" y="16" width="4" height="4" fill="#6b9bd2"/><rect x="8" y="16" width="4" height="4" fill="#6b9bd2"/><rect x="12" y="16" width="4" height="4" fill="#6b9bd2"/></svg>
<span class="t" style="left:54px;top:661px;font-weight:bold;color:#b8b8b8;letter-spacing:0.45px">Clipped (extent)</span>
<div class="a" style="left:31px;top:681px;width:16px;height:16px;background:#000"></div>
<span class="t" style="left:53px;top:683px;">900</span>
<span class="t" style="left:53px;top:703px;">5094</span>
<div class="cb" style="left:6px;top:723px"></div>
<svg class="a" style="left:8px;top:725px" width="12" height="12" viewBox="0 0 12 12"><path d="M1.5 6.5l3 3 6-7" fill="none" stroke="#333" stroke-width="1.3"/></svg>
<svg class="a" style="left:28px;top:721px" width="20" height="20" viewBox="0 0 20 20"><rect x="0" y="0" width="4" height="4" fill="#2e3f5c"/><rect x="4" y="0" width="4" height="4" fill="#6b9bd2"/><rect x="8" y="0" width="4" height="4" fill="#6b9bd2"/><rect x="12" y="0" width="4" height="4" fill="#2e3f5c"/><rect x="16" y="0" width="4" height="4" fill="#2e3f5c"/><rect x="0" y="4" width="4" height="4" fill="#6b9bd2"/><rect x="4" y="4" width="4" height="4" fill="#6b9bd2"/><rect x="8" y="4" width="4" height="4" fill="#2e3f5c"/><rect x="12" y="4" width="4" height="4" fill="#6b9bd2"/><rect x="16" y="4" width="4" height="4" fill="#6b9bd2"/><rect x="0" y="8" width="4" height="4" fill="#6b9bd2"/><rect x="4" y="8" width="4" height="4" fill="#2e3f5c"/><rect x="8" y="8" width="4" height="4" fill="#6b9bd2"/><rect x="12" y="8" width="4" height="4" fill="#2e3f5c"/><rect x="16" y="8" width="4" height="4" fill="#6b9bd2"/><rect x="0" y="12" width="4" height="4" fill="#2e3f5c"/><rect x="4" y="12" width="4" height="4" fill="#6b9bd2"/><rect x="8" y="12" width="4" height="4" fill="#2e3f5c"/><rect x="12" y="12" width="4" height="4" fill="#6b9bd2"/><rect x="16" y="12" width="4" height="4" fill="#6b9bd2"/><rect x="0" y="16" width="4" height="4" fill="#2e3f5c"/><rect x="4" y="16" width="4" height="4" fill="#6b9bd2"/><rect x="8" y="16" width="4" height="4" fill="#6b9bd2"/><rect x="12" y="16" width="4" height="4" fill="#6b9bd2"/></svg>
<span class="t" style="left:54px;top:725px;font-weight:bold;letter-spacing:0.45px">Clipped (extent)</span>
<div class="cb" style="left:6px;top:747px"></div>
<svg class="a" style="left:8px;top:749px" width="12" height="12" viewBox="0 0 12 12"><path d="M1.5 6.5l3 3 6-7" fill="none" stroke="#333" stroke-width="1.3"/></svg>
<svg class="a" style="left:28px;top:745px" width="20" height="20" viewBox="0 0 20 20"><rect x="0" y="0" width="4" height="4" fill="#2e3f5c"/><rect x="4" y="0" width="4" height="4" fill="#6b9bd2"/><rect x="8" y="0" width="4" height="4" fill="#6b9bd2"/><rect x="12" y="0" width="4" height="4" fill="#2e3f5c"/><rect x="16" y="0" width="4" height="4" fill="#2e3f5c"/><rect x="0" y="4" width="4" height="4" fill="#6b9bd2"/><rect x="4" y="4" width="4" height="4" fill="#6b9bd2"/><rect x="8" y="4" width="4" height="4" fill="#2e3f5c"/><rect x="12" y="4" width="4" height="4" fill="#6b9bd2"/><rect x="16" y="4" width="4" height="4" fill="#6b9bd2"/><rect x="0" y="8" width="4" height="4" fill="#6b9bd2"/><rect x="4" y="8" width="4" height="4" fill="#2e3f5c"/><rect x="8" y="8" width="4" height="4" fill="#6b9bd2"/><rect x="12" y="8" width="4" height="4" fill="#2e3f5c"/><rect x="16" y="8" width="4" height="4" fill="#6b9bd2"/><rect x="0" y="12" width="4" height="4" fill="#2e3f5c"/><rect x="4" y="12" width="4" height="4" fill="#6b9bd2"/><rect x="8" y="12" width="4" height="4" fill="#2e3f5c"/><rect x="12" y="12" width="4" height="4" fill="#6b9bd2"/><rect x="16" y="12" width="4" height="4" fill="#6b9bd2"/><rect x="0" y="16" width="4" height="4" fill="#2e3f5c"/><rect x="4" y="16" width="4" height="4" fill="#6b9bd2"/><rect x="8" y="16" width="4" height="4" fill="#6b9bd2"/><rect x="12" y="16" width="4" height="4" fill="#6b9bd2"/></svg>
<span class="t" style="left:54px;top:749px;font-weight:bold;letter-spacing:0.45px">LC08_L1TP_170032_20170...</span>
<div class="cb" style="left:6px;top:771px"></div>
<svg class="a" style="left:8px;top:773px" width="12" height="12" viewBox="0 0 12 12"><path d="M1.5 6.5l3 3 6-7" fill="none" stroke="#333" stroke-width="1.3"/></svg>
<svg class="a" style="left:28px;top:769px" width="20" height="20" viewBox="0 0 20 20"><rect x="0" y="0" width="4" height="4" fill="#2e3f5c"/><rect x="4" y="0" width="4" height="4" fill="#6b9bd2"/><rect x="8" y="0" width="4" height="4" fill="#6b9bd2"/><rect x="12" y="0" width="4" height="4" fill="#2e3f5c"/><rect x="16" y="0" width="4" height="4" fill="#2e3f5c"/><rect x="0" y="4" width="4" height="4" fill="#6b9bd2"/><rect x="4" y="4" width="4" height="4" fill="#6b9bd2"/><rect x="8" y="4" width="4" height="4" fill="#2e3f5c"/><rect x="12" y="4" width="4" height="4" fill="#6b9bd2"/><rect x="16" y="4" width="4" height="4" fill="#6b9bd2"/><rect x="0" y="8" width="4" height="4" fill="#6b9bd2"/><rect x="4" y="8" width="4" height="4" fill="#2e3f5c"/><rect x="8" y="8" width="4" height="4" fill="#6b9bd2"/><rect x="12" y="8" width="4" height="4" fill="#2e3f5c"/><rect x="16" y="8" width="4" height="4" fill="#6b9bd2"/><rect x="0" y="12" width="4" height="4" fill="#2e3f5c"/><rect x="4" y="12" width="4" height="4" fill="#6b9bd2"/><rect x="8" y="12" width="4" height="4" fill="#2e3f5c"/><rect x="12" y="12" width="4" height="4" fill="#6b9bd2"/><rect x="16" y="12" width="4" height="4" fill="#6b9bd2"/><rect x="0" y="16" width="4" height="4" fill="#2e3f5c"/><rect x="4" y="16" width="4" height="4" fill="#6b9bd2"/><rect x="8" y="16" width="4" height="4" fill="#6b9bd2"/><rect x="12" y="16" width="4" height="4" fill="#6b9bd2"/></svg>
<span class="t" style="left:54px;top:773px;font-weight:bold;letter-spacing:0.45px">LC08_L1TP_170032_20161...</span>
<div class="a" style="left:253px;top:94px;width:1548px;height:880px;background:#fff;border:1px solid #7f8790"></div>
<svg class="a" style="left:0;top:0" width="1896" height="1004" viewBox="0 0 1896 1004">
<defs>
<clipPath id="cv"><rect x="254" y="95" width="1546" height="878"/></clipPath>
<clipPath id="rs"><polygon points="446,47 1310,209 1085,879 245,720 254.8,680 269,620 291.4,540 318.5,460 337.6,380 396.5,200"/></clipPath>
<filter id="b16" filterUnits="userSpaceOnUse" x="150" y="0" width="1300" height="1000"><feGaussianBlur stdDeviation="16"/></filter>
<filter id="b8" filterUnits="userSpaceOnUse" x="150" y="0" width="1300" height="1000"><feGaussianBlur stdDeviation="8"/></filter>
<filter id="b4" filterUnits="userSpaceOnUse" x="150" y="0" width="1300" height="1000"><feGaussianBlur stdDeviation="4"/></filter>
<filter id="b2" filterUnits="userSpaceOnUse" x="150" y="0" width="1300" height="1000"><feGaussianBlur stdDeviation="1"/></filter>
<filter id="nd" x="0" y="0" width="100%" height="100%">
<feTurbulence type="turbulence" baseFrequency="0.035 0.06" numOctaves="3" seed="11"/>
<feColorMatrix type="matrix" values="0 0 0 0 0.28  0 0 0 0 0.24  0 0 0 0 0.18  -2.2 0 0 0 0.75"/>
</filter>
<filter id="nl" x="0" y="0" width="100%" height="100%">
<feTurbulence type="fractalNoise" baseFrequency="0.13" numOctaves="2" seed="21"/>
<feColorMatrix type="matrix" values="0 0 0 0 0.62  0 0 0 0 0.56  0 0 0 0 0.47  4 0 0 0 -2.1"/>
</filter>
</defs>
<g clip-path="url(#cv)">
<g clip-path="url(#rs)">
<polygon points="446,47 1310,209 1085,879 245,720 254.8,680 269,620 291.4,540 318.5,460 337.6,380 396.5,200" fill="#82765c"/>
<g filter="url(#b16)">
 <polygon points="250,535 640,545 650,605 250,615" fill="#736c57"/>
 <polygon points="250,630 720,650 740,800 250,760" fill="#7c7558"/>
 <polygon points="500,60 700,90 720,150 520,150" fill="#78795a"/>
 <polygon points="690,90 1330,200 1290,300 1270,345 1200,350 1100,345 1060,420 1000,425 940,420 870,400 850,340 800,300 740,260 700,220 650,180 640,120" fill="#6e8049"/>
 <polygon points="930,360 1060,350 1060,440 990,470 920,440" fill="#717d50"/>
 <polygon points="1050,440 1120,440 1200,470 1180,560 1070,570" fill="#70804e"/>
 <polygon points="560,280 700,260 700,330 560,330" fill="#77785a"/>
 <polygon points="720,360 860,360 860,420 720,420" fill="#767556"/>
 <polygon points="1000,700 1120,690 1100,880 980,860" fill="#786a58"/>
 <polygon points="880,780 1000,750 1080,790 1100,880 880,860" fill="#776858"/>
 <polygon points="1060,560 1230,560 1200,700 1080,720" fill="#7c6b58"/>
</g>
<g filter="url(#b8)">
 <polygon points="740,200 850,215 1000,240 1150,255 1290,265 1270,330 1150,335 1080,330 1000,320 900,300 800,260" fill="#668645"/>
 <ellipse cx="958" cy="378" rx="85" ry="36" fill="#688645"/>
 <polygon points="770,318 1100,332 1100,347 770,337" fill="#7a6e58" opacity=".7"/>
 <ellipse cx="825" cy="150" rx="40" ry="16" fill="#786c56"/>
 <ellipse cx="1000" cy="160" rx="50" ry="12" fill="#77705a" opacity=".8"/>
 <ellipse cx="1200" cy="200" rx="40" ry="10" fill="#7a6e58" opacity=".8"/>
 <ellipse cx="1140" cy="245" rx="20" ry="14" fill="#736f56" opacity=".7"/>
 <ellipse cx="795" cy="388" rx="50" ry="28" fill="#6e7451"/>
 <ellipse cx="880" cy="455" rx="40" ry="30" fill="#6b854c"/>
 <polygon points="975,550 1060,530 1110,545 1050,578 990,572" fill="#6c8a4c"/>
 <ellipse cx="700" cy="125" rx="40" ry="25" fill="#6f8050"/>
 <ellipse cx="1160" cy="470" rx="50" ry="40" fill="#6e844c"/>
 <ellipse cx="1230" cy="360" rx="30" ry="25" fill="#7a7058"/>
</g>
<g filter="url(#b4)">
 <polygon points="590,450 700,440 850,425 1000,440 1000,540 850,520 700,530 600,505" fill="#70844f" opacity=".85"/>
 <polygon points="677,521 741,518 805,505 830,496 853,505 885,515 901,534 948,553 975,588 1000,618 1040,655 1062,695 1090,738 1125,772 1120,800 1059,799 1040,760 1000,740 975,700 940,660 900,640 850,625 830,617 821,604 805,610 780,623 757,642 741,649 725,636 709,610 693,591 678,578 662,566 646,553 630,534 646,518" fill="#72904f"/>
 <polygon points="591,454 645,458 660,483 620,490 595,478" fill="#6c8a4c"/>
 <polygon points="700,614 772,626 800,612 820,600 829,619 867,631 903,635 927,647 951,669 970,686 980,710 1011,724 1030,743 1011,757 975,748 939,738 922,724 900,700 860,680 800,690 760,700 720,690" fill="#746e5f"/>
 <polygon points="860,660 918,660 930,700 880,700" fill="#6e695c" opacity=".7"/>
 <ellipse cx="868" cy="782" rx="24" ry="13" fill="#5a5044"/>
 <ellipse cx="795" cy="388" rx="22" ry="12" fill="#5f5c4e"/>
 <ellipse cx="1010" cy="615" rx="30" ry="16" fill="#857262"/>
</g>
<g fill="none" stroke="#56604a" stroke-width="1.4" opacity=".35" stroke-linejoin="round">
<polyline points="550,543 591,537 630,553 677,578 741,582 805,574 853,578 901,598 932,617 948,642 964,661 996,677 1012,703 1040,730 1070,760 1100,790"/>
<polyline points="575,400 582,464 614,521 591,537"/>
<polyline points="885,432 881,496 869,543 853,578"/>
<polyline points="640,330 660,380 680,420 700,470 705,520"/>
</g>
<g filter="url(#b2)">
<polygon points="1110,347 1117,345.5 1125,348 1133,351 1143,354 1151,357 1160,361 1167,364 1175,369 1183,371 1191,373 1199,378 1205,382 1212,387 1217,393 1225,397 1229,402 1228,409 1225,412 1260,411 1250,520 1209,510 1205.6,440 1205.6,425 1195,426 1171,427 1164,424 1163,412 1151,409 1142,400 1137,394 1134,391 1120,392 1107,391 1101,388 1103,384 1111,382 1117,379 1120,373 1125,370 1119,368 1111,362 1107,357 1108,350" fill="#0d1727"/>
<polygon points="549,659.5 555,660.7 557,667 561,674 567,679 574,687 572,692 560,695 546,692 550,681 549,672" fill="#0d1727"/>
<ellipse cx="409" cy="673" rx="7.5" ry="6" fill="#0d1727"/><rect x="406" y="664" width="8" height="2" fill="#0d1727"/>
<polygon points="432,197 456,197 458,215 450,223 440,212" fill="#0d1727"/>
<g fill="#1e3a3a"><ellipse cx="1015" cy="670" rx="7" ry="5"/><ellipse cx="1028" cy="682" rx="8" ry="6"/><ellipse cx="1040" cy="692" rx="7" ry="5"/></g>
<ellipse cx="876" cy="576" rx="5" ry="3" fill="#1a2a30"/>
<ellipse cx="554" cy="101" rx="7" ry="5" fill="#1a3446"/>
<ellipse cx="645" cy="131" rx="8" ry="6" fill="#1a3446"/>
<ellipse cx="532" cy="122" rx="9" ry="10" fill="#b8b8a8" opacity=".7"/>
<ellipse cx="1107" cy="425" rx="9" ry="7" fill="#2a2e24"/>
<ellipse cx="1120" cy="433" rx="9" ry="5" fill="#a8cadb"/>
<g fill="#a9a69a" opacity=".6"><ellipse cx="1170" cy="548" rx="5" ry="4"/><ellipse cx="1160" cy="565" rx="4" ry="4"/><ellipse cx="1175" cy="585" rx="5" ry="5"/><ellipse cx="1150" cy="598" rx="4" ry="3"/></g><g fill="#3a3a30" opacity=".6"><ellipse cx="1162" cy="552" rx="4" ry="3"/><ellipse cx="1170" cy="575" rx="4" ry="4"/><ellipse cx="1140" cy="590" rx="3" ry="3"/></g>
<ellipse cx="850" cy="706" rx="10" ry="4" fill="#40b0c0"/>
<ellipse cx="865" cy="712" rx="8" ry="3" fill="#e0e0e0"/>
</g>
<polyline points="446,47 396.5,200 337.6,380 318.5,460 291.4,540 269,620 254.8,680 245,720" fill="none" stroke="#2fa3a6" stroke-width="11"/>
<polyline points="446,47 396.5,200 384,238" fill="none" stroke="#3a9590" stroke-width="11"/>
<polyline points="384,238 345,355" fill="none" stroke="#5c5d4a" stroke-width="11"/>
<line x1="245" y1="720" x2="1085" y2="879" stroke="#2a9a9a" stroke-width="2"/>
</g>
<rect x="783.5" y="654.5" width="137" height="107" fill="none" stroke="#e02020" stroke-width="3"/>
</g>
</svg>

<div class="dtitle" style="left:1806px;top:96px;width:95px;height:22px"></div>
<span class="t" style="left:1811px;top:101px;">Proce...</span>
<svg class="a" style="left:1866px;top:101px" width="12" height="12" viewBox="0 0 12 12"><rect x="1.5" y="4.5" width="6" height="6" fill="none" stroke="#000" stroke-width="1.6"/><path d="M4.5 4.5V1.5h6v6H7.5" fill="none" stroke="#000" stroke-width="1.6"/></svg>
<svg class="a" style="left:1883px;top:101px" width="11" height="11" viewBox="0 0 11 11"><path d="M1 1l9 9M10 1l-9 9" stroke="#000" stroke-width="1.6"/></svg>
<div class="tree" style="left:1806px;top:146px;width:95px;height:22px;border-color:#7a7a7a"></div>
<span class="t" style="left:1809px;top:151px;color:#8a8a8a">Search...</span>
<div class="tree" style="left:1806px;top:168px;width:95px;height:806px"></div>
<div class="a" style="left:1807px;top:953px;width:89px;height:20px;background:#f0f0f0"></div>
<div class="a" style="left:1829px;top:954px;width:32px;height:18px;background:#cdcdcd"></div>
<span class="t" style="left:1835px;top:173px;">Recently used</span>
<svg class="a" style="left:1813px;top:175px" width="12" height="7" viewBox="0 0 12 7"><path d="M1 1l5 5 5-5" fill="none" stroke="#333" stroke-width="1.6"/></svg>
<svg class="a" style="left:1860.0px;top:190.0px" width="20" height="20" viewBox="0 0 24 24"><rect x="2" y="2" width="20" height="20" fill="#e8e8e8"/><circle cx="16" cy="16" r="6" fill="#999" opacity=".6"/><path d="M3 21c0-9 5-16 18-17" fill="none" stroke="#d04040" stroke-width="1.2"/><path d="M7 22c0-7 4-11 14-11" fill="none" stroke="#d04040" stroke-width="1.6"/></svg>
<svg class="a" style="left:1860.0px;top:214.0px" width="20" height="20" viewBox="0 0 24 24"><path d="M2 3h20" stroke="#e03030" stroke-width="2"/><path d="M2 5h20" stroke="#30c030" stroke-width="2"/><path d="M2 5h20" stroke="#3030e0" stroke-width="1" transform="translate(0 -3)"/><path d="M12 6v6M9 9l3 3 3-3" stroke="#5b8fc8" stroke-width="2" fill="none"/><path d="M2 15h14" stroke="#e03030" stroke-width="2"/><path d="M2 18h16" stroke="#30c030" stroke-width="2"/><path d="M2 21h18" stroke="#3030e0" stroke-width="2"/></svg>
<svg class="a" style="left:1860.0px;top:238.0px" width="20" height="20" viewBox="0 0 24 24"><rect x="6" y="2" width="4" height="4" fill="#2e3f5c"/><rect x="10" y="2" width="4" height="4" fill="#6b9bd2"/><rect x="14" y="2" width="4" height="4" fill="#2e3f5c"/><rect x="6" y="6" width="4" height="4" fill="#6b9bd2"/><rect x="10" y="6" width="4" height="4" fill="#2e3f5c"/><rect x="10" y="10" width="4" height="4" fill="#6b9bd2"/><rect x="12" y="13" width="9" height="9" rx="1.5" fill="#fff" stroke="#3d6596" stroke-width="1.4"/><circle cx="16.5" cy="17.5" r="2" fill="none" stroke="#3d6596"/></svg>
<svg class="a" style="left:1860.0px;top:262.0px" width="20" height="20" viewBox="0 0 24 24"><rect x="4" y="4" width="16" height="16" fill="#d8e2ec" opacity=".8"/><rect x="5" y="5" width="6" height="6" fill="#2e4a6a"/><rect x="11" y="5" width="6" height="6" fill="#8aaccc"/><rect x="5" y="11" width="6" height="6" fill="#8aaccc"/><rect x="11" y="11" width="6" height="6" fill="#2e4a6a"/><path d="M3 2v19h19" fill="none" stroke="#777" stroke-width=".8"/></svg>
<svg class="a" style="left:1860.0px;top:286.0px" width="20" height="20" viewBox="0 0 24 24"><rect x="4" y="4" width="16" height="16" fill="#d8e2ec" opacity=".8"/><rect x="5" y="5" width="6" height="6" fill="#2e4a6a"/><rect x="11" y="5" width="6" height="6" fill="#8aaccc"/><rect x="5" y="11" width="6" height="6" fill="#8aaccc"/><rect x="11" y="11" width="6" height="6" fill="#2e4a6a"/><path d="M3 2v19h19" fill="none" stroke="#777" stroke-width=".8"/></svg>
<svg class="a" style="left:1860.0px;top:310.0px" width="20" height="20" viewBox="0 0 24 24"><rect x="2" y="2" width="16" height="16" fill="#7a9cbc" stroke="#3d5a7a"/><rect x="14" y="14" width="9" height="9" rx="1.5" fill="#e0b830"/><circle cx="18.5" cy="18.5" r="2" fill="none" stroke="#fff"/></svg>
<svg class="a" style="left:1816px;top:338px" width="7" height="10" viewBox="0 0 7 10"><path d="M1 1l4 4-4 4" fill="none" stroke="#888" stroke-width="1.3"/></svg>
<svg class="a" style="left:1835.0px;top:334.0px" width="18" height="18" viewBox="0 0 24 24"><circle cx="11" cy="11" r="7.5" fill="none" stroke="#7cb342" stroke-width="4"/><path d="M13 13l7 7" stroke="#7cb342" stroke-width="4"/><circle cx="11" cy="11" r="2.5" fill="#f08030"/><path d="M11 11l6 6" stroke="#e06020" stroke-width="2"/></svg>
<svg class="a" style="left:1816px;top:362px" width="7" height="10" viewBox="0 0 7 10"><path d="M1 1l4 4-4 4" fill="none" stroke="#888" stroke-width="1.3"/></svg>
<svg class="a" style="left:1835.0px;top:358.0px" width="18" height="18" viewBox="0 0 24 24"><circle cx="11" cy="11" r="7.5" fill="none" stroke="#7cb342" stroke-width="4"/><path d="M13 13l7 7" stroke="#7cb342" stroke-width="4"/><circle cx="11" cy="11" r="2.5" fill="#f08030"/><path d="M11 11l6 6" stroke="#e06020" stroke-width="2"/></svg>
<svg class="a" style="left:1816px;top:386px" width="7" height="10" viewBox="0 0 7 10"><path d="M1 1l4 4-4 4" fill="none" stroke="#888" stroke-width="1.3"/></svg>
<svg class="a" style="left:1835.0px;top:382.0px" width="18" height="18" viewBox="0 0 24 24"><circle cx="11" cy="11" r="7.5" fill="none" stroke="#7cb342" stroke-width="4"/><path d="M13 13l7 7" stroke="#7cb342" stroke-width="4"/><circle cx="11" cy="11" r="2.5" fill="#f08030"/><path d="M11 11l6 6" stroke="#e06020" stroke-width="2"/></svg>
<svg class="a" style="left:1816px;top:410px" width="7" height="10" viewBox="0 0 7 10"><path d="M1 1l4 4-4 4" fill="none" stroke="#888" stroke-width="1.3"/></svg>
<svg class="a" style="left:1835.0px;top:406.0px" width="18" height="18" viewBox="0 0 24 24"><circle cx="11" cy="11" r="7.5" fill="none" stroke="#7cb342" stroke-width="4"/><path d="M13 13l7 7" stroke="#7cb342" stroke-width="4"/><circle cx="11" cy="11" r="2.5" fill="#f08030"/><path d="M11 11l6 6" stroke="#e06020" stroke-width="2"/></svg>
<svg class="a" style="left:1816px;top:434px" width="7" height="10" viewBox="0 0 7 10"><path d="M1 1l4 4-4 4" fill="none" stroke="#888" stroke-width="1.3"/></svg>
<svg class="a" style="left:1835.0px;top:430.0px" width="18" height="18" viewBox="0 0 24 24"><circle cx="11" cy="11" r="7.5" fill="none" stroke="#7cb342" stroke-width="4"/><path d="M13 13l7 7" stroke="#7cb342" stroke-width="4"/><circle cx="11" cy="11" r="2.5" fill="#f08030"/><path d="M11 11l6 6" stroke="#e06020" stroke-width="2"/></svg>
<svg class="a" style="left:1816px;top:458px" width="7" height="10" viewBox="0 0 7 10"><path d="M1 1l4 4-4 4" fill="none" stroke="#888" stroke-width="1.3"/></svg>
<svg class="a" style="left:1835.0px;top:454.0px" width="18" height="18" viewBox="0 0 24 24"><circle cx="11" cy="11" r="7.5" fill="none" stroke="#7cb342" stroke-width="4"/><path d="M13 13l7 7" stroke="#7cb342" stroke-width="4"/><circle cx="11" cy="11" r="2.5" fill="#f08030"/><path d="M11 11l6 6" stroke="#e06020" stroke-width="2"/></svg>
<svg class="a" style="left:1816px;top:482px" width="7" height="10" viewBox="0 0 7 10"><path d="M1 1l4 4-4 4" fill="none" stroke="#888" stroke-width="1.3"/></svg>
<svg class="a" style="left:1835.0px;top:478.0px" width="18" height="18" viewBox="0 0 24 24"><circle cx="11" cy="11" r="7.5" fill="none" stroke="#7cb342" stroke-width="4"/><path d="M13 13l7 7" stroke="#7cb342" stroke-width="4"/><circle cx="11" cy="11" r="2.5" fill="#f08030"/><path d="M11 11l6 6" stroke="#e06020" stroke-width="2"/></svg>
<svg class="a" style="left:1816px;top:506px" width="7" height="10" viewBox="0 0 7 10"><path d="M1 1l4 4-4 4" fill="none" stroke="#888" stroke-width="1.3"/></svg>
<svg class="a" style="left:1835.0px;top:502.0px" width="18" height="18" viewBox="0 0 24 24"><circle cx="11" cy="11" r="7.5" fill="none" stroke="#7cb342" stroke-width="4"/><path d="M13 13l7 7" stroke="#7cb342" stroke-width="4"/><circle cx="11" cy="11" r="2.5" fill="#f08030"/><path d="M11 11l6 6" stroke="#e06020" stroke-width="2"/></svg>
<svg class="a" style="left:1816px;top:530px" width="7" height="10" viewBox="0 0 7 10"><path d="M1 1l4 4-4 4" fill="none" stroke="#888" stroke-width="1.3"/></svg>
<svg class="a" style="left:1835.0px;top:526.0px" width="18" height="18" viewBox="0 0 24 24"><circle cx="11" cy="11" r="7.5" fill="none" stroke="#7cb342" stroke-width="4"/><path d="M13 13l7 7" stroke="#7cb342" stroke-width="4"/><circle cx="11" cy="11" r="2.5" fill="#f08030"/><path d="M11 11l6 6" stroke="#e06020" stroke-width="2"/></svg>
<svg class="a" style="left:1816px;top:554px" width="7" height="10" viewBox="0 0 7 10"><path d="M1 1l4 4-4 4" fill="none" stroke="#888" stroke-width="1.3"/></svg>
<svg class="a" style="left:1835.0px;top:550.0px" width="18" height="18" viewBox="0 0 24 24"><circle cx="11" cy="11" r="7.5" fill="none" stroke="#7cb342" stroke-width="4"/><path d="M13 13l7 7" stroke="#7cb342" stroke-width="4"/><circle cx="11" cy="11" r="2.5" fill="#f08030"/><path d="M11 11l6 6" stroke="#e06020" stroke-width="2"/></svg>
<svg class="a" style="left:1816px;top:578px" width="7" height="10" viewBox="0 0 7 10"><path d="M1 1l4 4-4 4" fill="none" stroke="#888" stroke-width="1.3"/></svg>
<svg class="a" style="left:1835.0px;top:574.0px" width="18" height="18" viewBox="0 0 24 24"><circle cx="11" cy="11" r="7.5" fill="none" stroke="#7cb342" stroke-width="4"/><path d="M13 13l7 7" stroke="#7cb342" stroke-width="4"/><circle cx="11" cy="11" r="2.5" fill="#f08030"/><path d="M11 11l6 6" stroke="#e06020" stroke-width="2"/></svg>
<svg class="a" style="left:1816px;top:602px" width="7" height="10" viewBox="0 0 7 10"><path d="M1 1l4 4-4 4" fill="none" stroke="#888" stroke-width="1.3"/></svg>
<svg class="a" style="left:1835.0px;top:598.0px" width="18" height="18" viewBox="0 0 24 24"><circle cx="11" cy="11" r="7.5" fill="none" stroke="#7cb342" stroke-width="4"/><path d="M13 13l7 7" stroke="#7cb342" stroke-width="4"/><circle cx="11" cy="11" r="2.5" fill="#f08030"/><path d="M11 11l6 6" stroke="#e06020" stroke-width="2"/></svg>
<svg class="a" style="left:1816px;top:626px" width="7" height="10" viewBox="0 0 7 10"><path d="M1 1l4 4-4 4" fill="none" stroke="#888" stroke-width="1.3"/></svg>
<svg class="a" style="left:1835.0px;top:622.0px" width="18" height="18" viewBox="0 0 24 24"><circle cx="11" cy="11" r="7.5" fill="none" stroke="#7cb342" stroke-width="4"/><path d="M13 13l7 7" stroke="#7cb342" stroke-width="4"/><circle cx="11" cy="11" r="2.5" fill="#f08030"/><path d="M11 11l6 6" stroke="#e06020" stroke-width="2"/></svg>
<svg class="a" style="left:1816px;top:650px" width="7" height="10" viewBox="0 0 7 10"><path d="M1 1l4 4-4 4" fill="none" stroke="#888" stroke-width="1.3"/></svg>
<svg class="a" style="left:1835.0px;top:646.0px" width="18" height="18" viewBox="0 0 24 24"><circle cx="11" cy="11" r="7.5" fill="none" stroke="#7cb342" stroke-width="4"/><path d="M13 13l7 7" stroke="#7cb342" stroke-width="4"/><circle cx="11" cy="11" r="2.5" fill="#f08030"/><path d="M11 11l6 6" stroke="#e06020" stroke-width="2"/></svg>
<svg class="a" style="left:1816px;top:674px" width="7" height="10" viewBox="0 0 7 10"><path d="M1 1l4 4-4 4" fill="none" stroke="#888" stroke-width="1.3"/></svg>
<svg class="a" style="left:1835.0px;top:670.0px" width="18" height="18" viewBox="0 0 24 24"><circle cx="11" cy="11" r="7.5" fill="none" stroke="#7cb342" stroke-width="4"/><path d="M13 13l7 7" stroke="#7cb342" stroke-width="4"/><circle cx="11" cy="11" r="2.5" fill="#f08030"/><path d="M11 11l6 6" stroke="#e06020" stroke-width="2"/></svg>
<svg class="a" style="left:1816px;top:698px" width="7" height="10" viewBox="0 0 7 10"><path d="M1 1l4 4-4 4" fill="none" stroke="#888" stroke-width="1.3"/></svg>
<svg class="a" style="left:1835.0px;top:694.0px" width="18" height="18" viewBox="0 0 24 24"><circle cx="11" cy="11" r="7.5" fill="none" stroke="#7cb342" stroke-width="4"/><path d="M13 13l7 7" stroke="#7cb342" stroke-width="4"/><circle cx="11" cy="11" r="2.5" fill="#f08030"/><path d="M11 11l6 6" stroke="#e06020" stroke-width="2"/></svg>
<svg class="a" style="left:1816px;top:722px" width="7" height="10" viewBox="0 0 7 10"><path d="M1 1l4 4-4 4" fill="none" stroke="#888" stroke-width="1.3"/></svg>
<svg class="a" style="left:1835.0px;top:718.0px" width="18" height="18" viewBox="0 0 24 24"><circle cx="11" cy="11" r="7.5" fill="none" stroke="#7cb342" stroke-width="4"/><path d="M13 13l7 7" stroke="#7cb342" stroke-width="4"/><circle cx="11" cy="11" r="2.5" fill="#f08030"/><path d="M11 11l6 6" stroke="#e06020" stroke-width="2"/></svg>
<svg class="a" style="left:1816px;top:746px" width="7" height="10" viewBox="0 0 7 10"><path d="M1 1l4 4-4 4" fill="none" stroke="#888" stroke-width="1.3"/></svg>
<svg class="a" style="left:1836.0px;top:742.0px" width="18" height="18" viewBox="0 0 24 24"><path d="M4 12l8-6 8 6-8 5z" fill="#6a9ad0"/><path d="M12 2v10" stroke="#333"/><circle cx="12" cy="14" r="7" fill="#4a7ab0" opacity=".7"/><text x="2" y="22" font-size="7" font-weight="bold" font-family="Liberation Sans" fill="#222">GDAL</text></svg>
<svg class="a" style="left:1816px;top:770px" width="7" height="10" viewBox="0 0 7 10"><path d="M1 1l4 4-4 4" fill="none" stroke="#888" stroke-width="1.3"/></svg>
<svg class="a" style="left:1836.0px;top:766.0px" width="18" height="18" viewBox="0 0 24 24"><path d="M12 22L6 4M12 22l1-20M12 22l7-16M12 22L3 10M12 22l9-10" stroke="#3a9a3a" stroke-width="1.5" fill="none"/></svg>
<svg class="a" style="left:1836.0px;top:790.0px" width="18" height="18" viewBox="0 0 24 24"><circle cx="9" cy="9" r="5" fill="#d02020" stroke="#d02020" stroke-width="3" stroke-dasharray="2 1.5"/><circle cx="17" cy="15" r="3.5" fill="#888" stroke="#888" stroke-width="2" stroke-dasharray="1.5 1"/><circle cx="10" cy="19" r="2.5" fill="#6a9ad0"/></svg>
<svg class="a" style="left:1816px;top:818px" width="7" height="10" viewBox="0 0 7 10"><path d="M1 1l4 4-4 4" fill="none" stroke="#888" stroke-width="1.3"/></svg>
<svg class="a" style="left:1836.0px;top:814.0px" width="18" height="18" viewBox="0 0 24 24"><circle cx="12" cy="12" r="9.5" fill="none" stroke="#2060b0" stroke-width="2.2"/><path d="M5 9c4-3 10-3 14 1M5 14c4 4 10 4 14 0M8 12c2-2 6-2 8 0" stroke="#2060b0" stroke-width="2" fill="none"/></svg>
<svg class="a" style="left:1836.0px;top:838.0px" width="18" height="18" viewBox="0 0 24 24"><path d="M12 2c-5 0-5 2-5 4v3h5v1H5c-2 0-3 2-3 5s1 5 3 5h2v-3c0-2 2-4 4-4h5c2 0 3-1 3-3V6c0-2-2-4-7-4z" fill="#3d79b8"/><circle cx="9.5" cy="5" r="1" fill="#fff"/><path d="M12 22c5 0 5-2 5-4v-3h-5v-1h7c2 0 3-2 3-5s-1-5-3-5h-2v3c0 2-2 4-4 4H8c-2 0-3 1-3 3v4c0 2 2 4 7 4z" fill="#f5cf3a"/><path d="M17 19l4 2-4 2" fill="none" stroke="#333" stroke-width="1"/></svg>
<svg class="a" style="left:1809.5px;top:123.5px" width="17" height="17" viewBox="0 0 24 24"><circle cx="8" cy="8" r="4.5" fill="#d02020" stroke="#d02020" stroke-width="3" stroke-dasharray="2 1.5"/><circle cx="15" cy="12" r="3.5" fill="#888" stroke="#888" stroke-width="2" stroke-dasharray="1.5 1"/><circle cx="10" cy="17" r="2.5" fill="#8ab0e0"/><path d="M13 17h9l-4.5 5z" fill="#111"/></svg>
<svg class="a" style="left:1833.5px;top:123.5px" width="17" height="17" viewBox="0 0 24 24"><path d="M11 2c-4 0-4 2-4 3v3h4v1H5c-2 0-3 2-3 4s1 4 3 4h2v-2c0-2 2-3 3-3h4c2 0 3-1 3-3V5c0-2-2-3-6-3z" fill="#3d79b8"/><path d="M11 21c4 0 4-2 4-3v-3h-4v-1h6c2 0 3-2 3-4s-1-4-3-4h-2v2c0 2-2 3-3 3H8c-2 0-3 1-3 3v3c0 2 2 4 6 4z" fill="#f5cf3a"/><path d="M13 17h9l-4.5 5z" fill="#111"/></svg>
<svg class="a" style="left:1856.5px;top:123.5px" width="17" height="17" viewBox="0 0 24 24"><circle cx="12" cy="12" r="10" fill="#f4f4f4" stroke="#999" stroke-width="1.4"/><path d="M12 5v7l4 4" stroke="#999" stroke-width="1.4" fill="none"/></svg>
<span class="t" style="left:1882px;top:126px;font-weight:bold;font-size:13px">&raquo;</span>
<svg class="a" style="left:1873px;top:151px" width="16" height="12" viewBox="0 0 16 12"><path d="M5 0h11v12H5L0 6z" fill="#bbb"/><path d="M8 3l5 6M13 3l-5 6" stroke="#fff" stroke-width="1.5"/></svg>
<svg class="a" style="left:1813px;top:958px" width="7" height="10" viewBox="0 0 7 10"><path d="M6 1L2 5l4 4" fill="none" stroke="#333" stroke-width="1.4"/></svg>
<svg class="a" style="left:1883px;top:958px" width="7" height="10" viewBox="0 0 7 10"><path d="M1 1l4 4-4 4" fill="none" stroke="#333" stroke-width="1.4"/></svg>
<span class="t" style="left:1859px;top:337px;">Cartography</span>
<span class="t" style="left:1859px;top:361px;">Database</span>
<span class="t" style="left:1859px;top:385px;">File tools</span>
<span class="t" style="left:1859px;top:409px;">Graphics</span>
<span class="t" style="left:1859px;top:433px;">Interpolation</span>
<span class="t" style="left:1859px;top:457px;">Layer tools</span>
<span class="t" style="left:1859px;top:481px;">Network analysis</span>
<span class="t" style="left:1859px;top:505px;">Raster analysis</span>
<span class="t" style="left:1859px;top:529px;">Raster terrain analysis</span>
<span class="t" style="left:1859px;top:553px;">Raster tools</span>
<span class="t" style="left:1859px;top:577px;">Vector analysis</span>
<span class="t" style="left:1859px;top:601px;">Vector creation</span>
<span class="t" style="left:1859px;top:625px;">Vector general</span>
<span class="t" style="left:1859px;top:649px;">Vector geometry</span>
<span class="t" style="left:1859px;top:673px;">Vector overlay</span>
<span class="t" style="left:1859px;top:697px;">Vector selection</span>
<span class="t" style="left:1859px;top:721px;">Vector table</span>
<span class="t" style="left:1886px;top:194px;">Contour</span>
<span class="t" style="left:1886px;top:218px;">Polygonize</span>
<span class="t" style="left:1886px;top:242px;">Translate</span>
<span class="t" style="left:1886px;top:266px;">Clip raster by mask layer</span>
<span class="t" style="left:1886px;top:290px;">Clip raster by extent</span>
<span class="t" style="left:1886px;top:314px;">Extract projection</span>
<span class="t" style="left:1859px;top:745px;">GDAL</span>
<span class="t" style="left:1859px;top:769px;">GRASS</span>
<span class="t" style="left:1859px;top:793px;">Models</span>
<span class="t" style="left:1859px;top:817px;">SAGA</span>
<span class="t" style="left:1859px;top:841px;">Scripts</span>
<div class="a" style="left:-1px;top:979px;width:190px;height:22px;background:#fff;border:1px solid #7a7a7a"></div>
<span class="t" style="left:10px;top:984px;color:#6d6d6d">Type to locate (Ctrl+K)</span>
<span class="t" style="left:1010px;top:984px;">Coordinate</span>
<div class="a" style="left:1075px;top:979px;width:106px;height:22px;background:#fff;border:1px solid #7a7a7a"></div>
<span class="t" style="left:1085px;top:984px;">44.231,41.238</span>
<span class="t" style="left:1217px;top:984px;">Scale</span>
<div class="a" style="left:1251px;top:979px;width:99px;height:22px;background:#fff;border:1px solid #7a7a7a"></div>
<span class="t" style="left:1256px;top:984px;">1:744,423</span>
<span class="t" style="left:1386px;top:984px;">Magnifier</span>
<div class="a" style="left:1442px;top:979px;width:87px;height:22px;background:#fff;border:1px solid #7a7a7a"></div>
<span class="t" style="left:1445px;top:984px;">100%</span>
<span class="t" style="left:1538px;top:984px;">Rotation</span>
<div class="a" style="left:1593px;top:979px;width:85px;height:22px;background:#fff;border:1px solid #7a7a7a"></div>
<span class="t" style="left:1597px;top:984px;">0.0 °</span>
<div class="cb" style="left:1685px;top:982px"></div>
<span class="t" style="left:1707px;top:984px;">Render</span>
<span class="t" style="left:1789px;top:984px;">EPSG:4326</span>
<svg class="a" style="left:1183.0px;top:980.0px" width="20" height="20" viewBox="0 0 24 24"><path d="M5 5c3-4 9-3 11 2l3 8c1 4-2 7-6 7s-7-2-8-6z" fill="#fff" stroke="#222" stroke-width="1.8"/><path d="M8 6l5 5" stroke="#222" stroke-width="2.5"/><circle cx="13" cy="17" r="2" fill="none" stroke="#222" stroke-width="1.4"/><path d="M18 4l3-2M20 7l3-1" stroke="#555" stroke-dasharray="1 1"/></svg>
<svg class="a" style="left:1354.0px;top:981.0px" width="18" height="18" viewBox="0 0 24 24"><path d="M7 11V7a5 5 0 0 1 10 0v4" fill="none" stroke="#777" stroke-width="2.5"/><rect x="4" y="11" width="16" height="11" rx="1.5" fill="#777"/></svg>
<svg class="a" style="left:1765.0px;top:981.0px" width="18" height="18" viewBox="0 0 24 24"><ellipse cx="12" cy="12" rx="10" ry="9" fill="none" stroke="#777" stroke-width="1.3"/><path d="M2 12h20M4 7h16M4 17h16M12 3v18" stroke="#777" stroke-width="1.2"/><ellipse cx="12" cy="12" rx="4.5" ry="9" fill="none" stroke="#777" stroke-width="1.2"/></svg>
<svg class="a" style="left:1869.0px;top:980.0px" width="22" height="22" viewBox="0 0 24 24"><path d="M12 3c6 0 10 3.5 10 8s-4 8-10 8c-1 0-2 0-3-.3L5 22l1-4c-2-1.5-4-4-4-7 0-4.5 4-8 10-8z" fill="#666"/><circle cx="7.5" cy="11" r="1.6" fill="#fff"/><circle cx="12" cy="11" r="1.6" fill="#fff"/><circle cx="16.5" cy="11" r="1.6" fill="#fff"/></svg>
<svg class="a" style="left:1334px;top:987px" width="12" height="7" viewBox="0 0 12 7"><path d="M1 1l5 5 5-5" fill="none" stroke="#444" stroke-width="1.2"/></svg>
<div class="a" style="left:1510px;top:981px;width:15px;height:18px;background:#e8e8e8;border:1px solid #c8c8c8"></div>
<svg class="a" style="left:1513px;top:983px" width="9" height="14" viewBox="0 0 9 14"><path d="M0 5l4.5-4 4.5 4zM0 9l4.5 4 4.5-4z" fill="#111"/></svg>
<div class="a" style="left:1662px;top:981px;width:15px;height:18px;background:#e8e8e8;border:1px solid #c8c8c8"></div>
<svg class="a" style="left:1665px;top:983px" width="9" height="14" viewBox="0 0 9 14"><path d="M0 5l4.5-4 4.5 4zM0 9l4.5 4 4.5-4z" fill="#111"/></svg>
<svg class="a" style="left:1687px;top:984px" width="12" height="12" viewBox="0 0 12 12"><path d="M1.5 6.5l3 3 6-7" fill="none" stroke="#333" stroke-width="1.3"/></svg>
<div class="menu" style="left:332px;top:26px;width:190px;height:173px;box-shadow:3px 3px 3px rgba(0,0,0,.3)"></div>
<div class="a" style="left:335px;top:148px;width:180px;height:24px;background:#91c9f7"></div>
<span class="t" style="left:369px;top:35px;">Raster Calculator...</span>
<span class="t" style="left:369px;top:59px;">Align Rasters...</span>
<span class="t" style="left:369px;top:83px;">Analysis</span>
<svg class="a" style="left:503px;top:85px" width="5" height="9" viewBox="0 0 5 9"><path d="M0 0l5 4.5L0 9z" fill="#000"/></svg>
<span class="t" style="left:369px;top:107px;">Projections</span>
<svg class="a" style="left:503px;top:109px" width="5" height="9" viewBox="0 0 5 9"><path d="M0 0l5 4.5L0 9z" fill="#000"/></svg>
<span class="t" style="left:369px;top:131px;">Miscellaneous</span>
<svg class="a" style="left:503px;top:133px" width="5" height="9" viewBox="0 0 5 9"><path d="M0 0l5 4.5L0 9z" fill="#000"/></svg>
<span class="t" style="left:369px;top:155px;">Extraction</span>
<svg class="a" style="left:503px;top:157px" width="5" height="9" viewBox="0 0 5 9"><path d="M0 0l5 4.5L0 9z" fill="#000"/></svg>
<span class="t" style="left:369px;top:179px;">Conversion</span>
<svg class="a" style="left:503px;top:181px" width="5" height="9" viewBox="0 0 5 9"><path d="M0 0l5 4.5L0 9z" fill="#000"/></svg>
<svg class="a" style="left:337.0px;top:31.0px" width="20" height="20" viewBox="0 0 24 24"><rect x="0" y="0" width="6" height="6" fill="#2e4a6a"/><rect x="6" y="0" width="4" height="4" fill="#6b9bd2"/><rect x="0" y="6" width="4" height="4" fill="#6b9bd2"/><rect x="6" y="6" width="17" height="16" fill="#eee" stroke="#888"/><path d="M6 11h17M6 16h17" stroke="#888"/><circle cx="12" cy="11" r="1.5" fill="#d44"/><circle cx="17" cy="11" r="1.5" fill="#d44"/><circle cx="11" cy="16" r="1.5" fill="#4a4"/><circle cx="16" cy="16" r="1.5" fill="#4a4"/><circle cx="13" cy="20" r="1.5" fill="#48c"/></svg>
<div class="menu" style="left:515px;top:148px;width:222px;height:78px"></div>
<div class="a" style="left:518px;top:175px;width:215px;height:24px;background:#91c9f7"></div>
<div class="a" style="left:520px;top:153px;width:20px;height:20px;background:#f8f8f8"></div>
<div class="a" style="left:520px;top:177px;width:20px;height:20px;background:#e6f1fb"></div>
<svg class="a" style="left:520.0px;top:153.0px" width="20" height="20" viewBox="0 0 24 24"><rect x="4" y="4" width="16" height="16" fill="#d8e2ec" opacity=".8"/><rect x="5" y="5" width="6" height="6" fill="#2e4a6a"/><rect x="11" y="5" width="6" height="6" fill="#8aaccc"/><rect x="5" y="11" width="6" height="6" fill="#8aaccc"/><rect x="11" y="11" width="6" height="6" fill="#2e4a6a"/><path d="M3 2v19h19" fill="none" stroke="#777" stroke-width=".8"/></svg>
<svg class="a" style="left:520.0px;top:177.0px" width="20" height="20" viewBox="0 0 24 24"><rect x="4" y="4" width="16" height="16" fill="#d8e2ec" opacity=".8"/><rect x="5" y="5" width="6" height="6" fill="#2e4a6a"/><rect x="11" y="5" width="6" height="6" fill="#8aaccc"/><rect x="5" y="11" width="6" height="6" fill="#8aaccc"/><rect x="11" y="11" width="6" height="6" fill="#2e4a6a"/><path d="M3 2v19h19" fill="none" stroke="#777" stroke-width=".8"/></svg>
<svg class="a" style="left:520.0px;top:201.0px" width="20" height="20" viewBox="0 0 24 24"><rect x="2" y="2" width="20" height="20" fill="#e8e8e8"/><circle cx="16" cy="16" r="6" fill="#999" opacity=".6"/><path d="M3 21c0-9 5-16 18-17" fill="none" stroke="#d04040" stroke-width="1.2"/><path d="M7 22c0-7 4-11 14-11" fill="none" stroke="#d04040" stroke-width="1.6"/></svg>
<span class="t" style="left:552px;top:157px;">Clip raster by extent</span>
<span class="t" style="left:552px;top:181px;">Clip raster by mask layer</span>
<span class="t" style="left:552px;top:205px;">Contour</span>
<span class="t" style="left:1531px;top:900px;font-size:25px;line-height:30px;color:#bdbdbd">Activate Windows</span>
<span class="t" style="left:1531px;top:935px;font-size:18px;line-height:21px;color:#bdbdbd">Go to Settings to activate Windows.</span>
</body></html>
